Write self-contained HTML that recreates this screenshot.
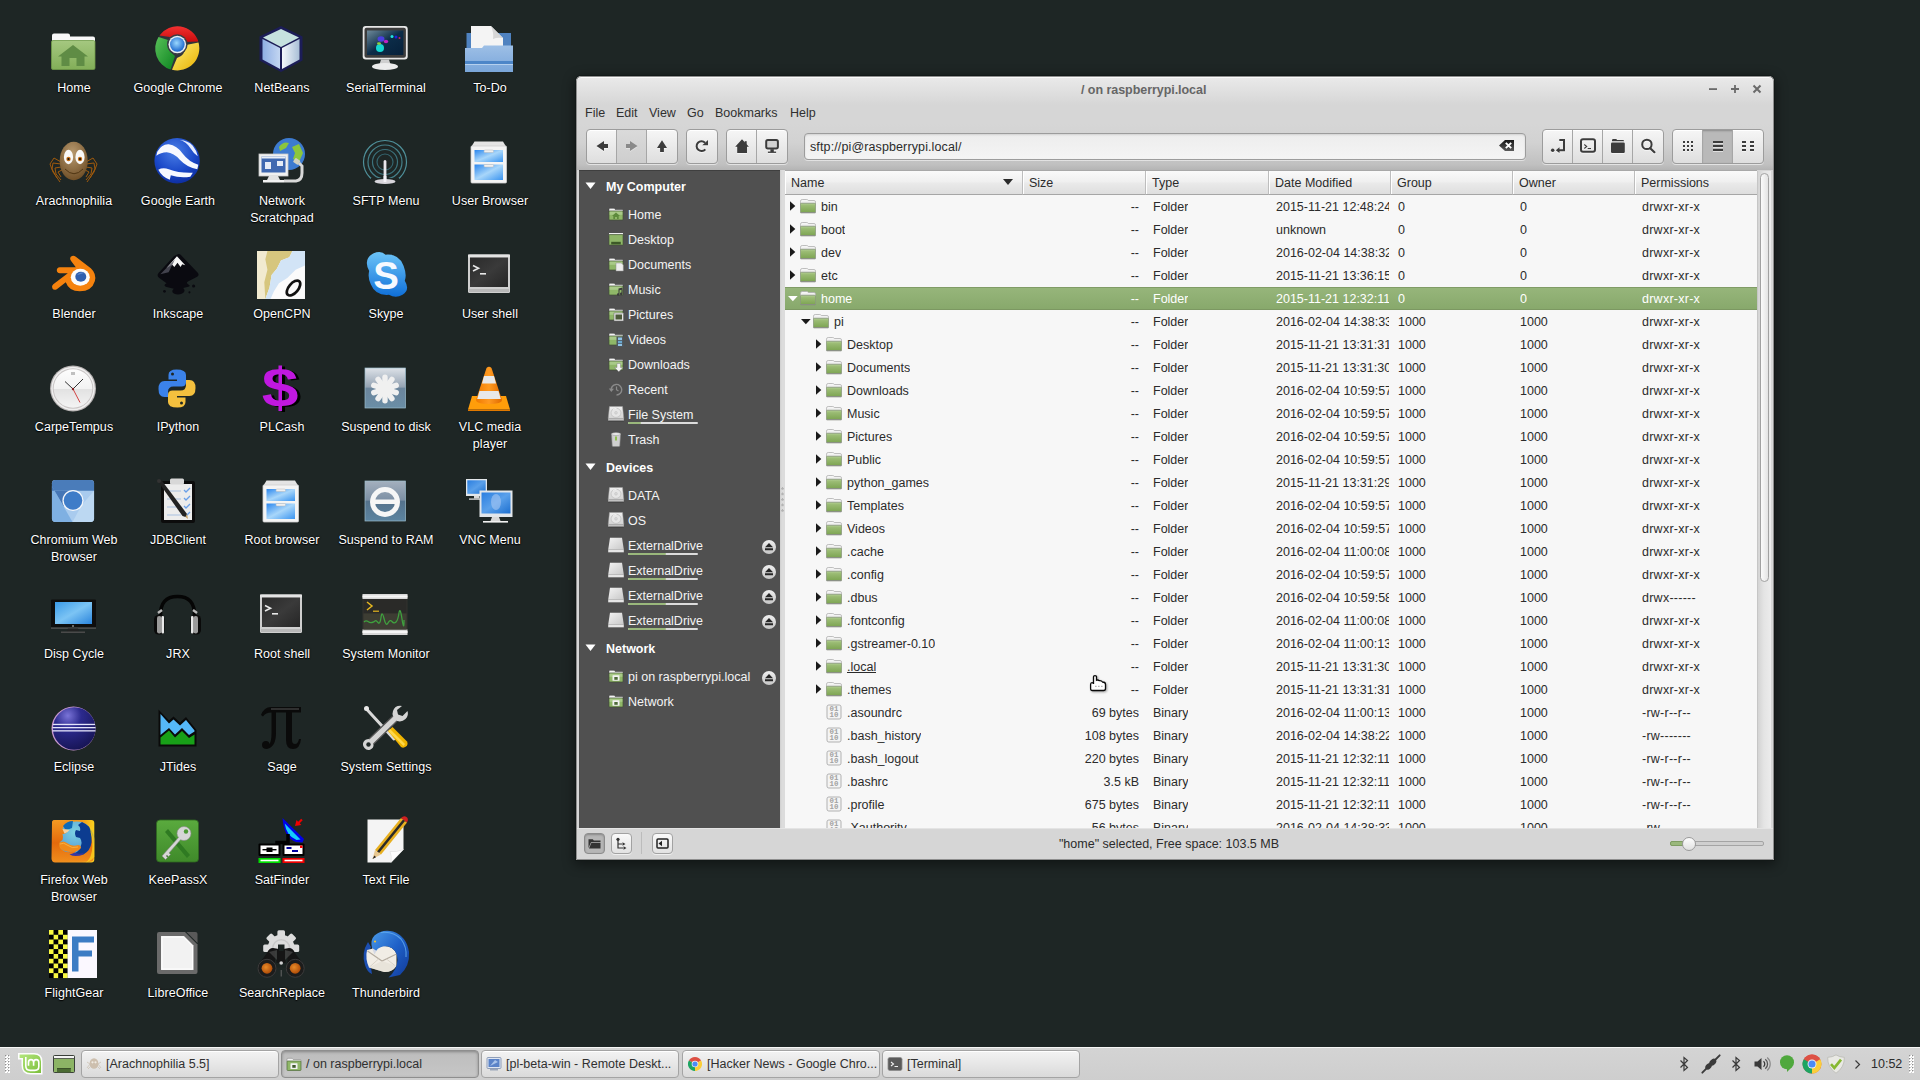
<!DOCTYPE html>
<html><head><meta charset="utf-8"><title>/ on raspberrypi.local</title>
<style>
*{box-sizing:border-box}
html,body{margin:0;padding:0}
body{width:1920px;height:1080px;overflow:hidden;background:#1e2625;font:12.5px "Liberation Sans", "DejaVu Sans", sans-serif;color:#2b2b2b;position:relative}
.abs,.dl,.di,.t,.tb,.sbi,.sbh,.c,.hd,.tk{position:absolute}
svg{display:block;position:absolute;overflow:visible}
.dl{width:120px;text-align:center;color:#fff;font-size:12.5px;line-height:17px;text-shadow:0 1px 1px #000,0 0 2px rgba(0,0,0,.8);white-space:pre-line;letter-spacing:.05px}
.di{width:48px;height:48px}
.di svg{left:0;top:0;width:48px;height:48px}
#win{position:absolute;left:576px;top:76px;width:1198px;height:784px;background:#d6d6d6;border-radius:5px 5px 0 0;box-shadow:0 0 0 1px rgba(18,24,23,.9),0 3px 12px 2px rgba(0,0,0,.42);overflow:hidden}
#title{position:absolute;left:0;top:1px;width:100%;height:47px;background:linear-gradient(#e9e9e9 0,#d6d6d6 27px,#d6d6d6 100%);border-top:1px solid #fafafa;border-radius:5px 5px 0 0}
#tbar{position:absolute;left:0;top:48px;width:100%;height:46px;background:linear-gradient(#d6d6d6 0,#d2d2d2 40%,#c0c0c0 88%,#b4b4b4 100%)}
.t{white-space:nowrap;line-height:16px;height:16px}
.grp{position:absolute;top:53px;height:35px;border:1px solid #9c9c9c;border-radius:4px;background:linear-gradient(#f6f6f6,#dedede);box-shadow:0 1px 0 rgba(255,255,255,.55), inset 0 1px 0 #fff;overflow:hidden}
.grp i{position:absolute;top:0;width:1px;height:100%;background:#a6a6a6}
.grp b{position:absolute;top:0;height:100%;background:#b9b9b9;box-shadow:inset 0 1px 2px rgba(0,0,0,.25)}
.grp u{position:absolute;top:0;height:100%;background:linear-gradient(#dadada,#cecece)}
.grp svg{top:8px;width:16px;height:16px}
#side{position:absolute;left:3px;top:94px;width:201px;height:658px;background:#505050;color:#fff;border-top:1px solid #3f3f3f}
.sbh{left:27px;font-weight:bold;color:#fff;line-height:16px;white-space:nowrap}
.sbi{left:49px;color:#f4f4f4;line-height:16px;white-space:nowrap}
.sic{position:absolute;left:29px;width:16px;height:16px}
.sic svg{left:0;top:0;width:16px;height:16px}
.bar{position:absolute;left:49px;width:70px;height:2px;background:#dcdcdc;border-radius:1px}
.bar span{position:absolute;left:0;top:0;height:2px;background:#9ab87c;border-radius:1px}
.ej{position:absolute;left:183px;width:14px;height:14px;border-radius:7px;background:linear-gradient(#efefef,#c6c6c6)}
.ej svg{left:3px;top:3.300px;width:8px;height:8px}
#list{position:absolute;left:209px;top:94px;width:972px;height:658px;background:#f7f7f7;overflow:hidden;border-top:1px solid #a8a8a8}
.hd{top:0;height:24px;background:linear-gradient(#fafafa 0,#f0f0f0 45%,#e9e9e9 55%,#dedede 100%);border-bottom:1px solid #a6a6a6;border-right:1px solid #bdbdbd;line-height:24px;padding-left:6px;white-space:nowrap;box-shadow:inset 1px 0 0 #fff}
.row{position:absolute;left:0;width:973px;height:23px}
.row.sel{background:linear-gradient(#97b67b,#87a86b);color:#fff;box-shadow:inset 0 1px 0 #809c66,inset 0 -1px 0 #7c9862}
.c{top:1px;height:22px;line-height:23px;white-space:nowrap;overflow:hidden}
.row svg.f{top:3px;width:16px;height:16px}
.row svg.e{top:6px;width:10px;height:10px}
#status{position:absolute;left:0;top:752px;width:100%;height:32px;background:#d6d6d6;border-top:1px solid #e4e4e4}
.sb{position:absolute;top:4px;width:21px;height:21px;border:1px solid #a2a2a2;border-radius:4px;background:linear-gradient(#fafafa,#e2e2e2);box-shadow:0 1px 0 rgba(255,255,255,.6)}
.sb svg{left:3px;top:3px;width:13px;height:13px}
#panel{position:absolute;left:0;top:1047px;width:1920px;height:33px;background:linear-gradient(#d4d4d4,#cecece);border-top:1px solid #f6f6f6}
.tk{top:2px;height:28px;width:198px;margin-left:-1px;border:1px solid #a4a4a4;border-radius:4px;background:linear-gradient(#f3f3f3,#dadada);box-shadow:inset 0 1px 0 #fff;line-height:26px;padding-left:24px;white-space:nowrap;overflow:hidden;color:#303030}
.tk.act{background:linear-gradient(#bdbdbd,#c6c6c6);box-shadow:inset 0 1px 3px rgba(0,0,0,.3);border-color:#8e8e8e}
.tk svg{left:4px;top:5px;width:16px;height:16px}
.tr{position:absolute;top:7px;width:18px;height:18px}
.tr svg{left:0;top:0;width:18px;height:18px}
</style></head><body>

<div id="desktop">
<div class="di" style="left:49px;top:25px"><svg viewBox="0 0 48 48"><defs><linearGradient id="hm1" x1="0" y1="0" x2="0" y2="1"><stop offset="0" stop-color="#a5c880"/><stop offset="1" stop-color="#82ae58"/></linearGradient></defs>
<path d="M3 10.500q0-2 2-2h14q2 0 2 2v1h23q2 0 2 2V18H3z" fill="#f8f8f8"/>
<rect x="2.500" y="15.500" width="43.500" height="29" rx="1.500" fill="url(#hm1)" stroke="#6f9a48" stroke-width=".8"/>
<path d="M24 20L39 31.500H35.500V41H27.500V33H20.500V41H12.500V31.500H9z" fill="#5f8c45"/></svg></div>
<div class="dl" style="left:14px;top:80px">Home</div>
<div class="di" style="left:153px;top:25px"><svg viewBox="0 0 48 48"><defs><radialGradient id="gc1" cx=".45" cy=".4" r=".6"><stop offset="0" stop-color="#9ad8ff"/><stop offset="1" stop-color="#1a66cc"/></radialGradient>
<linearGradient id="gc2" x1="0" y1="0" x2="0" y2="1"><stop offset="0" stop-color="#f23030"/><stop offset="1" stop-color="#c80c0c"/></linearGradient>
<linearGradient id="gc3" x1="0" y1="0" x2="1" y2="1"><stop offset="0" stop-color="#58c058"/><stop offset="1" stop-color="#0c8420"/></linearGradient>
<linearGradient id="gc4" x1="0" y1="0" x2="1" y2="1"><stop offset="0" stop-color="#fff078"/><stop offset="1" stop-color="#e8b000"/></linearGradient></defs>
<circle cx="24.300" cy="23.500" r="22" fill="#30343a"/>
<path d="M6.500 10.500A22 22 0 0 1 45.300 16.500L31 17Q27 9 17 12z" fill="url(#gc2)"/>
<path d="M45.500 17.500A22 22 0 0 1 19 44.800L24 33Q32 31 33 20z" fill="url(#gc4)"/>
<path d="M17.500 44.500A22 22 0 0 1 5.500 12L15 15Q12 24 22 31z" fill="url(#gc3)"/>
<circle cx="24.300" cy="19.500" r="10.300" fill="#3a3e46"/>
<circle cx="24.300" cy="19.500" r="8.800" fill="#e9eef2"/>
<circle cx="24.300" cy="19.500" r="7.300" fill="url(#gc1)"/></svg></div>
<div class="dl" style="left:118px;top:80px">Google Chrome</div>
<div class="di" style="left:257px;top:25px"><svg viewBox="0 0 48 48"><defs><linearGradient id="nb1" x1="0" y1="0" x2="1" y2="0"><stop offset="0" stop-color="#8eaee4"/><stop offset="1" stop-color="#c3d6f2"/></linearGradient><linearGradient id="nb2" x1="0" y1="0" x2="1" y2="0"><stop offset="0" stop-color="#f4f8fc"/><stop offset="1" stop-color="#a9bfd6"/></linearGradient></defs>
<path d="M24 1L45.500 11.500V35.500L24 47L2.500 35.500V11.500z" fill="#1c1d57"/>
<path d="M24 4L42 12.500L24 22L6 12.500z" fill="#c6e2df"/>
<path d="M5.500 14L23 23V44L5.500 34.500z" fill="url(#nb1)"/>
<path d="M25 23L42.500 14V34.500L25 44z" fill="url(#nb2)"/></svg></div>
<div class="dl" style="left:222px;top:80px">NetBeans</div>
<div class="di" style="left:361px;top:25px"><svg viewBox="0 0 48 48"><defs><linearGradient id="st1" x1="0" y1="0" x2="1" y2="1"><stop offset="0" stop-color="#6e8a9a"/><stop offset=".5" stop-color="#0c2c48"/><stop offset="1" stop-color="#06203a"/></linearGradient></defs>
<rect x="1.700" y="1" width="45" height="33.500" rx="3" fill="#e6e6e6"/>
<rect x="3.500" y="2.800" width="41.400" height="30" rx="2" fill="#3c3c3c"/>
<rect x="6" y="5.500" width="36.400" height="24.500" fill="url(#st1)"/>
<ellipse cx="20" cy="14" rx="3.500" ry="2.800" fill="#4b3fe0"/><ellipse cx="25" cy="16.500" rx="2.200" ry="1.800" fill="#c020c0"/>
<ellipse cx="19" cy="23" rx="4" ry="4" fill="#14d6d0"/><ellipse cx="18" cy="18.500" rx="2" ry="1.300" fill="#8fd040"/>
<circle cx="31" cy="11.500" r="1.500" fill="#20e0e0"/><circle cx="35" cy="12" r="1.500" fill="#2020e0"/><circle cx="38.500" cy="13" r="1" fill="#d02060"/>
<path d="M20 34.500h8l1.500 5h-11z" fill="#cfcfcf"/>
<ellipse cx="24" cy="41.500" rx="13" ry="3.600" fill="#ececec"/></svg></div>
<div class="dl" style="left:326px;top:80px">SerialTerminal</div>
<div class="di" style="left:465px;top:25px"><svg viewBox="0 0 48 48"><defs><linearGradient id="td1" x1="0" y1="0" x2="0" y2="1"><stop offset="0" stop-color="#9dbfe6"/><stop offset="1" stop-color="#7aa6da"/></linearGradient></defs>
<path d="M1.500 8h44.500v20H1.500z" fill="#4f82c0"/>
<path d="M6 1h20l12 12v18H6z" fill="#f4f4f4"/>
<path d="M26 1l12 12q-6-1-10 1q1-6-2-13z" fill="#d6d6d6"/>
<path d="M0 23h17l2-2.500h29V47H0z" fill="url(#td1)"/>
<rect x="0" y="36" width="48" height="3" fill="#4d86c8"/><rect x="0" y="39" width="48" height="1" fill="#b5d0ee"/></svg></div>
<div class="dl" style="left:430px;top:80px">To-Do</div>
<div class="di" style="left:49px;top:138px"><svg viewBox="0 0 48 48"><defs><radialGradient id="ar1" cx=".45" cy=".3" r=".75"><stop offset="0" stop-color="#b89a70"/><stop offset="1" stop-color="#6b4a22"/></radialGradient></defs>
<g fill="none" stroke="#a05a0c" stroke-width="1">
<path d="M12 24L5 20L1 26L4 34L11 44M12 26L4 25L3 31L8 40M12 29L6 30L7 36L12 42M13 32L9 34L12 39"/>
<path d="M37 24L44 20L48 26L45 34L38 44M37 26L45 25L46 31L41 40M37 29L43 30L42 36L37 42M36 32L40 34L37 39"/></g>
<ellipse cx="24.700" cy="23" rx="14" ry="19.300" fill="url(#ar1)"/>
<ellipse cx="19.500" cy="19" rx="4.600" ry="7.200" fill="#f8f8f8"/><ellipse cx="31" cy="19" rx="4.600" ry="7.200" fill="#f8f8f8"/>
<circle cx="19.500" cy="21" r="2.200" fill="#c87018"/><circle cx="31" cy="21" r="2.200" fill="#c87018"/>
<circle cx="19.500" cy="21" r="1.100" fill="#111"/><circle cx="31" cy="21" r="1.100" fill="#111"/>
<path d="M16 31q9 9.500 18 0" fill="none" stroke="#4a300f" stroke-width=".9"/></svg></div>
<div class="dl" style="left:14px;top:193px">Arachnophilia</div>
<div class="di" style="left:153px;top:138px"><svg viewBox="0 0 48 48"><defs><radialGradient id="ge1" cx=".45" cy=".3" r=".75"><stop offset="0" stop-color="#4a7ee6"/><stop offset=".6" stop-color="#1a48c8"/><stop offset="1" stop-color="#0c2a9a"/></radialGradient></defs>
<circle cx="24.100" cy="22.700" r="22.700" fill="url(#ge1)"/>
<g transform="translate(-.2 -2.300)"><path d="M4.500 16Q9 8 16 8.500Q24 9.500 30 18Q36 26 45.500 29L44.500 33.500Q34 31.500 27 24Q21 17 14 16.500Q8 16.500 3.500 20z" fill="#f6f8ff"/>
<path d="M27 4.500Q33 5 38 13Q41 18 45 20.500Q44 15 40 10Q35 4.500 27 4.500z" fill="#e6edff"/>
<path d="M5.500 34Q10 31.500 16 33.500Q26 37.500 40 37L37.500 41Q27 42.500 18 39.500L17 44Q9 41 5.500 34z" fill="#f6f8ff"/></g></svg></div>
<div class="dl" style="left:118px;top:193px">Google Earth</div>
<div class="di" style="left:257px;top:138px"><svg viewBox="0 0 48 48"><circle cx="32" cy="16" r="16" fill="#3d7bd0"/>
<path d="M22 9q4-6 10-4l-3 5l-6 3zM35 9l7-3l4 9l-4 9l-6-3l2-6z" fill="#8cc63c"/>
<rect x="2" y="16" width="29" height="22" fill="#f0f0f0" stroke="#c8c8c8" stroke-width=".8"/>
<rect x="4.500" y="18.500" width="24" height="16" fill="#3f68b0"/>
<rect x="4.500" y="18.500" width="24" height="2" fill="#e8eef8"/>
<rect x="8" y="24" width="6" height="7" fill="#e6ecf6"/><rect x="20" y="23" width="6" height="5" fill="#e6ecf6"/>
<path d="M12 38h9l2 4H10z" fill="#e2e2e2"/><rect x="6" y="42" width="21" height="2.500" fill="#f2f2f2"/>
<path d="M27 43h12q6-1 6-8v-7l-3-3" fill="none" stroke="#d8d8d8" stroke-width="3"/>
<rect x="37" y="21" width="6" height="5" rx="1" fill="#d0d0c0" transform="rotate(35 40 23)"/></svg></div>
<div class="dl" style="left:222px;top:193px">Network
Scratchpad</div>
<div class="di" style="left:361px;top:138px"><svg viewBox="0 0 48 48"><g fill="none" stroke="#4f909a" stroke-width="1.200"><circle cx="24" cy="24" r="21.500"/><circle cx="24" cy="24" r="17" stroke="#45808a"/><circle cx="24" cy="24" r="12.500" stroke="#3c727c"/><circle cx="24" cy="24" r="8" stroke="#34646e"/></g>
<rect x="10" y="40" width="28" height="8" fill="#1e2625"/>
<path d="M22.600 23q1.400-2 2.800 0V43h-2.800z" fill="#e8e6ec"/>
<ellipse cx="24" cy="43.500" rx="10.500" ry="2.600" fill="#d8d6dc"/><rect x="22.600" y="38" width="2.800" height="6" fill="#f4f2f8"/></svg></div>
<div class="dl" style="left:326px;top:193px">SFTP Menu</div>
<div class="di" style="left:465px;top:138px"><svg viewBox="0 0 48 48"><defs><linearGradient id="cb1" x1="0" y1="0" x2="1" y2="1"><stop offset="0" stop-color="#2a86ee"/><stop offset=".5" stop-color="#a8d6fa"/><stop offset="1" stop-color="#3a94f0"/></linearGradient></defs>
<path d="M9.500 3.500h28.500l3 5H6.500z" fill="#e4e4e4"/>
<rect x="6" y="8" width="35.500" height="37" rx="1" fill="#f4f4f4" stroke="#cfcfcf" stroke-width=".8"/>
<rect x="9.500" y="12" width="28.500" height="12" fill="url(#cb1)"/>
<rect x="9.500" y="26.500" width="28.500" height="15.500" fill="url(#cb1)"/>
<rect x="19" y="12" width="9.500" height="2.500" rx="1" fill="#f0f0f0" stroke="#b8b8b8" stroke-width=".5"/>
<rect x="19" y="26.500" width="9.500" height="2.500" rx="1" fill="#f0f0f0" stroke="#b8b8b8" stroke-width=".5"/></svg></div>
<div class="dl" style="left:430px;top:193px">User Browser</div>
<div class="di" style="left:49px;top:251px"><svg viewBox="0 0 48 48"><g transform="translate(1.800 -1.800)"><path d="M20 7.500q2.500-2 5 0L40 19q6 5.500 4 13q-3 10-15 10q-11 0-14-9L6 40q-3 1.500-4.500-1q-1-2.500 1-4L17 24H9q-3-.3-3-3t3-3h16L20.500 12q-2-2.500-.5-4.500z" fill="#f5820e"/>
<ellipse cx="29.500" cy="28" rx="9.500" ry="8.500" fill="#fbfbfb"/><ellipse cx="30" cy="27.500" rx="5.500" ry="5" fill="#2f5fae"/><path d="M26 26q3-4 8-2.500z" fill="#5a86cc"/></g></svg></div>
<div class="dl" style="left:14px;top:306px">Blender</div>
<div class="di" style="left:153px;top:251px"><svg viewBox="0 0 48 48"><g transform="translate(-1 0) scale(1.040 1.060)"><path d="M24 3.500q2-1.500 4 .5L44 20.500q2 2.500-1 4l-8 4q-3 1.500 0 3q3 1.500-1 2.500l-4 1q3 3-1 5t-8 0q-3-2 0-4.500l-7-1.500q-4-1.500 0-3.500l-7-5q-3-2.500-.5-5L21 5z" fill="#0a0a10"/>
<path d="M24 5l8 8.500l-3-1l-1.500 2.500l-3-4l-3 4l-2-2l-5.500 3z" fill="#f6f6f6"/>
<path d="M8 22L22 8l-6 12z" fill="#50505c" opacity=".8"/>
<circle cx="40" cy="33" r="1.500" fill="#0a0a10"/><circle cx="12" cy="38" r="1.300" fill="#0a0a10"/><circle cx="36" cy="39" r="1" fill="#0a0a10"/></g></svg></div>
<div class="dl" style="left:118px;top:306px">Inkscape</div>
<div class="di" style="left:257px;top:251px"><svg viewBox="0 0 48 48"><g transform="translate(-1.040 -1.560) scale(1.043)"><rect x="1" y="1.500" width="46" height="46" fill="#fbfbfb"/>
<path d="M1 1.500h34l-3 6l-8 3l-4 8l-5 6l-2 12l-4 11H1z" fill="#d6c67e"/>
<path d="M1 1.500h10l-2 8l2 10l-3 12l1 16H1z" fill="#f1ead0"/>
<path d="M35 1.500h12v14l-9 4l-8 8l-8 5l-5 8l-3 7h-5l4-11l2-12l5-6l4-8l8-3z" fill="#d2e4f6"/>
<ellipse cx="36" cy="37" rx="8.500" ry="4.500" transform="rotate(-50 36 37)" fill="none" stroke="#111" stroke-width="2.600"/></g></svg></div>
<div class="dl" style="left:222px;top:306px">OpenCPN</div>
<div class="di" style="left:361px;top:251px"><svg viewBox="0 0 48 48"><defs><linearGradient id="sk1" x1="0" y1="0" x2="0" y2="1"><stop offset="0" stop-color="#6cc4f8"/><stop offset="1" stop-color="#0f6fd8"/></linearGradient></defs>
<g transform="translate(24 24) scale(1.130) translate(-23.500 -24)"><path d="M13 5q7-3 11 1q12-1 16 10q3 8 1 13q5 8-2 12.500q-6 3.500-12 0q-12 1-16-9q-3-6-1.500-12Q4 10 13 5z" fill="url(#sk1)"/>
<text x="24.500" y="36.500" font-family="Liberation Sans,sans-serif" font-weight="bold" font-size="34" text-anchor="middle" fill="#f6f9ff">S</text></g></svg></div>
<div class="dl" style="left:326px;top:306px">Skype</div>
<div class="di" style="left:465px;top:251px"><svg viewBox="0 0 48 48"><defs><linearGradient id="tm1" x1="0" y1="0" x2="1" y2="1"><stop offset="0" stop-color="#2a2a2a"/><stop offset=".5" stop-color="#3a3a3a"/><stop offset="1" stop-color="#262626"/></linearGradient></defs>
<rect x="3" y="3.500" width="42" height="38.500" rx="1.500" fill="#cfcfcf"/>
<rect x="3" y="3.500" width="42" height="3" fill="#e4e4e4"/>
<rect x="5" y="6.500" width="38" height="29.500" fill="url(#tm1)"/>
<rect x="4" y="38" width="40" height="3" fill="#b8b8b8"/>
<path d="M8 14.500l5.500 2.800L8 20" fill="none" stroke="#e8e8e8" stroke-width="1.600"/><rect x="15" y="22" width="6" height="1.600" fill="#e8e8e8"/></svg></div>
<div class="dl" style="left:430px;top:306px">User shell</div>
<div class="di" style="left:49px;top:364px"><svg viewBox="0 0 48 48"><defs><linearGradient id="ct1" x1="0" y1="0" x2="0" y2="1"><stop offset="0" stop-color="#fdfdfd"/><stop offset=".5" stop-color="#f2f2f2"/><stop offset=".52" stop-color="#e2e2e2"/><stop offset="1" stop-color="#f4f4f4"/></linearGradient></defs>
<circle cx="24" cy="24.500" r="23" fill="#b8b4b4"/><circle cx="24" cy="24.500" r="21.800" fill="#efefef"/><circle cx="24" cy="24.500" r="20.300" fill="#c8c4c4"/>
<circle cx="24" cy="24.500" r="19.300" fill="url(#ct1)"/>
<rect x="22" y="8" width="4" height="3" fill="#c0c0c0"/>
<path d="M24 25L16 17.500M24 25L34 15" stroke="#333" stroke-width="1"/><path d="M24 25L31 38.500" stroke="#d03030" stroke-width=".9"/><circle cx="24" cy="25" r="1.200" fill="#802020"/></svg></div>
<div class="dl" style="left:14px;top:419px">CarpeTempus</div>
<div class="di" style="left:153px;top:364px"><svg viewBox="0 0 48 48"><path d="M23.500 5.500q-8 0-8 5.500v4.500h8.500v1.500H11.500q-6 0-6 8t6 8H15v-5q0-5.500 5.500-5.500h8q4.500 0 4.500-4.500V11q0-5.500-9.500-5.500z" fill="#3b82ea"/>
<circle cx="19.500" cy="10" r="1.500" fill="#1e2625"/>
<path d="M24.500 43.500q8 0 8-5.500v-4.500H24V32h12.500q6 0 6-8t-6-8H33v5q0 5.500-5.500 5.500h-8q-4.500 0-4.500 4.500V38q0 5.500 9.500 5.500z" fill="#f4c03e"/>
<circle cx="28.500" cy="39" r="1.500" fill="#1e2625"/></svg></div>
<div class="dl" style="left:118px;top:419px">IPython</div>
<div class="di" style="left:257px;top:364px"><svg viewBox="0 0 48 48"><text x="21.800" y="43.500" font-family="Liberation Sans,sans-serif" font-weight="bold" font-size="55" text-anchor="middle" fill="#000" transform="scale(1.200 1)" >$</text>
<text x="19.300" y="42.500" font-family="Liberation Sans,sans-serif" font-weight="bold" font-size="55" text-anchor="middle" fill="#c018e0" transform="scale(1.200 1)">$</text></svg></div>
<div class="dl" style="left:222px;top:419px">PLCash</div>
<div class="di" style="left:361px;top:364px"><svg viewBox="0 0 48 48"><defs><linearGradient id="su1" x1="0" y1="0" x2="0" y2="1"><stop offset="0" stop-color="#dde2e8"/><stop offset=".48" stop-color="#94a2b2"/><stop offset=".5" stop-color="#6c859c"/><stop offset="1" stop-color="#6a8ea6"/></linearGradient></defs>
<rect x="4" y="4" width="40.500" height="40" fill="url(#su1)" stroke="#9cbccc" stroke-width=".7"/><g fill="#f0f0f0"><circle cx="24" cy="25" r="7"/><rect x="21.300" y="10.500" width="5.400" height="14" rx="2.700" transform="rotate(0 24 25)"/><rect x="21.300" y="10.500" width="5.400" height="14" rx="2.700" transform="rotate(36 24 25)"/><rect x="21.300" y="10.500" width="5.400" height="14" rx="2.700" transform="rotate(72 24 25)"/><rect x="21.300" y="10.500" width="5.400" height="14" rx="2.700" transform="rotate(108 24 25)"/><rect x="21.300" y="10.500" width="5.400" height="14" rx="2.700" transform="rotate(144 24 25)"/><rect x="21.300" y="10.500" width="5.400" height="14" rx="2.700" transform="rotate(180 24 25)"/><rect x="21.300" y="10.500" width="5.400" height="14" rx="2.700" transform="rotate(216 24 25)"/><rect x="21.300" y="10.500" width="5.400" height="14" rx="2.700" transform="rotate(252 24 25)"/><rect x="21.300" y="10.500" width="5.400" height="14" rx="2.700" transform="rotate(288 24 25)"/><rect x="21.300" y="10.500" width="5.400" height="14" rx="2.700" transform="rotate(324 24 25)"/></g></svg></div>
<div class="dl" style="left:326px;top:419px">Suspend to disk</div>
<div class="di" style="left:465px;top:364px"><svg viewBox="0 0 48 48"><defs><linearGradient id="vl1" x1="0" y1="0" x2="1" y2="0"><stop offset="0" stop-color="#f07a00"/><stop offset=".5" stop-color="#ff9a20"/><stop offset="1" stop-color="#e06a00"/></linearGradient></defs>
<path d="M7 32h34l4 13.500H3z" fill="#ff9d0a"/><path d="M3 45.500h42v1.500H3z" fill="#e07800"/>
<path d="M21.500 4q2.500-2.500 5 0L37 36q0 4-13 4T11 36z" fill="url(#vl1)"/>
<path d="M19 12h10l2 7.500H17z" fill="#e8e8e8"/><path d="M14.500 27h19l2.300 8H12.200z" fill="#e8e8e8"/></svg></div>
<div class="dl" style="left:430px;top:419px">VLC media
player</div>
<div class="di" style="left:49px;top:477px"><svg viewBox="0 0 48 48"><g transform="translate(.500 .500) scale(.979)"><rect x="2.500" y="2.500" width="43" height="43" rx="3.500" fill="#a9cbee"/>
<path d="M2.500 6q0-3.500 3.500-3.500h36q3.500 0 3.500 3.500V13.500H2.500z" fill="#4a7cba"/>
<path d="M2.500 9L23.500 45.500H6Q2.500 45.500 2.500 42z" fill="#7fb0e2"/><path d="M2.500 9l12 20.500l9-16H2.500z" fill="#4576b6"/>
<path d="M45.500 13.500V42q0 3.500-3.500 3.500H23.500L33 28z" fill="#bcd8f2"/>
<circle cx="24" cy="23.500" r="10.800" fill="#f4f7fb"/><circle cx="24" cy="23.500" r="9.500" fill="#3e7cc8"/></g></svg></div>
<div class="dl" style="left:14px;top:532px">Chromium Web
Browser</div>
<div class="di" style="left:153px;top:477px"><svg viewBox="0 0 48 48"><rect x="8" y="4" width="34" height="42" rx="2" fill="#0c0c0c"/>
<rect x="11" y="7" width="28" height="36" fill="#ececec"/>
<rect x="17" y="1.500" width="14" height="6" rx="1.500" fill="#d8d8d8"/>
<g stroke="#a8c0e0" stroke-width="1"><path d="M14 14h14M14 22h14M14 30h14M14 38h14"/></g>
<g fill="none" stroke="#6aa0e8" stroke-width="1.300"><path d="M31 13l2 2l4-4M31 21l2 2l4-4M31 29l2 2l4-4M31 37l2 2l4-4"/></g>
<path d="M5 4.500l3-2L34 37l-1.500 3l-3-1z" fill="#222"/><path d="M32.500 40L34 37l1 5z" fill="#c8a060"/><circle cx="6" cy="4" r="2" fill="#333"/></svg></div>
<div class="dl" style="left:118px;top:532px">JDBClient</div>
<div class="di" style="left:257px;top:477px"><svg viewBox="0 0 48 48"><defs><linearGradient id="cb2" x1="0" y1="0" x2="1" y2="1"><stop offset="0" stop-color="#2a86ee"/><stop offset=".5" stop-color="#a8d6fa"/><stop offset="1" stop-color="#3a94f0"/></linearGradient></defs>
<path d="M9.500 3.500h28.500l3 5H6.500z" fill="#e4e4e4"/>
<rect x="6" y="8" width="35.500" height="37" rx="1" fill="#f4f4f4" stroke="#cfcfcf" stroke-width=".8"/>
<rect x="9.500" y="12" width="28.500" height="12" fill="url(#cb2)"/>
<rect x="9.500" y="26.500" width="28.500" height="15.500" fill="url(#cb2)"/>
<rect x="19" y="12" width="9.500" height="2.500" rx="1" fill="#f0f0f0" stroke="#b8b8b8" stroke-width=".5"/>
<rect x="19" y="26.500" width="9.500" height="2.500" rx="1" fill="#f0f0f0" stroke="#b8b8b8" stroke-width=".5"/></svg></div>
<div class="dl" style="left:222px;top:532px">Root browser</div>
<div class="di" style="left:361px;top:477px"><svg viewBox="0 0 48 48"><defs><linearGradient id="su2" x1="0" y1="0" x2="0" y2="1"><stop offset="0" stop-color="#a4b0be"/><stop offset=".48" stop-color="#7c8fa4"/><stop offset=".5" stop-color="#55728c"/><stop offset="1" stop-color="#5c84a0"/></linearGradient></defs>
<rect x="4" y="4" width="40.500" height="40" fill="url(#su2)" stroke="#9cbccc" stroke-width=".7"/><circle cx="24" cy="25" r="12.500" fill="none" stroke="#f6f6f6" stroke-width="5"/><rect x="12" y="22.500" width="24" height="4.500" fill="#f6f6f6"/></svg></div>
<div class="dl" style="left:326px;top:532px">Suspend to RAM</div>
<div class="di" style="left:465px;top:477px"><svg viewBox="0 0 48 48"><defs><linearGradient id="vn1" x1="0" y1="0" x2="1" y2="1"><stop offset="0" stop-color="#2a7ee0"/><stop offset=".5" stop-color="#5aa0ea"/><stop offset="1" stop-color="#1c6fd0"/></linearGradient></defs>
<rect x="1" y="2" width="21" height="17" fill="#e2e6ea"/><rect x="2.300" y="3.300" width="18.400" height="13.500" fill="url(#vn1)"/><rect x="9" y="19" width="5" height="2.500" fill="#d8d8d8"/><rect x="4" y="21.500" width="14" height="1.200" fill="#e8e8e8"/>
<rect x="14.500" y="13.500" width="33" height="26.500" fill="#e2e6ea"/><rect x="16.500" y="15.500" width="29" height="21" fill="url(#vn1)"/>
<ellipse cx="31" cy="25" rx="5" ry="8" fill="#a8c8f4" opacity=".6"/>
<path d="M27 40h7l1.500 4h-10z" fill="#d8d8d8"/><rect x="18" y="44" width="25" height="1.600" fill="#f2f2f2"/></svg></div>
<div class="dl" style="left:430px;top:532px">VNC Menu</div>
<div class="di" style="left:49px;top:590px"><svg viewBox="0 0 48 48"><defs><linearGradient id="dc1" x1="0" y1="0" x2="1" y2="1"><stop offset="0" stop-color="#3a9ae8"/><stop offset=".5" stop-color="#7cc4f4"/><stop offset="1" stop-color="#2a84dc"/></linearGradient></defs>
<rect x="2" y="9.500" width="45" height="28" rx="1" fill="#0e0e0e"/>
<rect x="6" y="12" width="37" height="22" fill="url(#dc1)"/>
<rect x="2" y="37.500" width="45" height="1.200" fill="#5a5a5a"/><path d="M19 38.500h10l1 3H18z" fill="#222"/><rect x="12" y="41.500" width="24" height="1.500" fill="#4a4a4a"/><circle cx="24" cy="36" r=".8" fill="#ddd"/></svg></div>
<div class="dl" style="left:14px;top:646px">Disp Cycle</div>
<div class="di" style="left:153px;top:590px"><svg viewBox="0 0 48 48"><path d="M7.500 26Q7 6.500 24.500 6.500T41.500 26" fill="none" stroke="#050505" stroke-width="3.500"/>
<path d="M5 23l4-3M44 23l-4-3" stroke="#b8b8b8" stroke-width="2.500"/>
<rect x="1" y="25" width="10.500" height="19.500" rx="4.500" fill="#0a0a0a"/><rect x="37.500" y="25" width="10.500" height="19.500" rx="4.500" fill="#0a0a0a"/>
<rect x="4" y="26" width="4.500" height="17.500" rx="2.200" fill="#9a9a9a"/><rect x="40.500" y="26" width="4.500" height="17.500" rx="2.200" fill="#9a9a9a"/>
<rect x="8.500" y="26" width="2.500" height="17.500" rx="1" fill="#e8e8e8"/><rect x="38" y="26" width="2.500" height="17.500" rx="1" fill="#e8e8e8"/></svg></div>
<div class="dl" style="left:118px;top:646px">JRX</div>
<div class="di" style="left:257px;top:591px"><svg viewBox="0 0 48 48"><defs><linearGradient id="tm2" x1="0" y1="0" x2="1" y2="1"><stop offset="0" stop-color="#2a2a2a"/><stop offset=".5" stop-color="#3a3a3a"/><stop offset="1" stop-color="#262626"/></linearGradient></defs>
<rect x="3" y="3.500" width="42" height="38.500" rx="1.500" fill="#cfcfcf"/>
<rect x="3" y="3.500" width="42" height="3" fill="#e4e4e4"/>
<rect x="5" y="6.500" width="38" height="29.500" fill="url(#tm2)"/>
<rect x="4" y="38" width="40" height="3" fill="#b8b8b8"/>
<path d="M8 14.500l5.500 2.800L8 20" fill="none" stroke="#e8e8e8" stroke-width="1.600"/><rect x="15" y="22" width="6" height="1.600" fill="#e8e8e8"/></svg></div>
<div class="dl" style="left:222px;top:646px">Root shell</div>
<div class="di" style="left:361px;top:590px"><svg viewBox="0 0 48 48"><rect x="1.500" y="4" width="45" height="41" fill="#33332e"/>
<rect x="1.500" y="4" width="45" height="5" fill="#d8d8d8"/><rect x="1.500" y="5.500" width="45" height="2" fill="#f6f6f6"/>
<rect x="1.500" y="39.500" width="45" height="5.500" fill="#d8d8d8"/><rect x="1.500" y="41" width="45" height="2" fill="#f6f6f6"/>
<rect x="2.500" y="9" width="43" height="14.500" fill="#2a2a28"/><rect x="2.500" y="23.500" width="43" height="16" fill="#3d3d33"/>
<path d="M6 12l5 4l-5 4" fill="none" stroke="#e6b820" stroke-width="1.500"/><rect x="12" y="20.500" width="6" height="1.500" fill="#c09a20"/>
<path d="M3 32q2-2 4-.5t4 1t3-1.500t3 1.500t3-5t3 1t4 4.500t4-1.500t4 .5t3-9t3 6t2 1" fill="none" stroke="#3fa03f" stroke-width="1.300"/></svg></div>
<div class="dl" style="left:326px;top:646px">System Monitor</div>
<div class="di" style="left:49px;top:704px"><svg viewBox="0 0 48 48"><defs><radialGradient id="ec1" cx=".35" cy=".2" r=".9"><stop offset="0" stop-color="#7a74d8"/><stop offset=".35" stop-color="#2c2a8e"/><stop offset="1" stop-color="#14124e"/></radialGradient></defs>
<circle cx="24.500" cy="24.500" r="22" fill="#c898d0"/><circle cx="25.200" cy="24.500" r="21.300" fill="url(#ec1)"/>
<g fill="#e4e4fa"><rect x="4" y="19.800" width="42" height="1.300"/><rect x="3.500" y="23" width="43" height="1.300"/><rect x="3.500" y="26.200" width="43" height="1.300"/></g></svg></div>
<div class="dl" style="left:14px;top:759px">Eclipse</div>
<div class="di" style="left:153px;top:703px"><svg viewBox="0 0 48 48"><path d="M5.500 6.500L5.500 43.500H43.500V27L33 14L27 19.500L20.500 13.500L16 17.500z" fill="#0a0a0a"/>
<path d="M7.500 11L7.500 32L16 25L22 31.500L29 25L36 32L41.500 28.500V27.500L33 17L27 22.500L20.500 16.500L16 20.500z" fill="#55b8f8"/>
<path d="M7.500 34.500L16 27.500L22 34.500L29 28L36 35L41.500 31.500V41.500H7.500z" fill="#18a018"/></svg></div>
<div class="dl" style="left:118px;top:759px">JTides</div>
<div class="di" style="left:257px;top:703px"><svg viewBox="0 0 48 48"><path d="M4 12q3-8 10-8h30v5.500H35V37q0 4 3 4t4-5h2q-1 10-8 10t-7-9V9.500H19V30q0 14-9 16q-5 0-5-4t4-4q3 0 3.500 3q2-3 2-11V9.500q-6 0-8.500 4z" fill="#0a0a0a"/>
<path d="M14 6h28" stroke="#555" stroke-width="1"/></svg></div>
<div class="dl" style="left:222px;top:759px">Sage</div>
<div class="di" style="left:361px;top:703px"><svg viewBox="0 0 48 48"><path d="M5 5.500L33 36" stroke="#d8d8d8" stroke-width="3" stroke-linecap="round"/><circle cx="5.500" cy="5.500" r="2.500" fill="#e8e8e8"/>
<path d="M27 28l4.500-4L46 38.500q1.500 3-1 5t-5 .5z" fill="#f0b400"/><path d="M27 28l2-2L44 41l-1.500 2z" fill="#ffd84a"/>
<path d="M41 3q-7-1-9 5q-1 3 0 5L8 36q-4 0-5.500 3t1 6t6 1.500t3-5.500L36 18q5 1.500 8.500-2t2-8l-5 5l-4.500-1.500L36 7z" fill="#d4d4d4"/>
<path d="M32 13L8 36M36 18L12.500 41" stroke="#555" stroke-width="1.200"/><circle cx="7.500" cy="41.500" r="2.200" fill="#1e2625"/></svg></div>
<div class="dl" style="left:326px;top:759px">System Settings</div>
<div class="di" style="left:49px;top:816px"><svg viewBox="0 0 48 48"><defs><radialGradient id="ff1" cx=".45" cy=".3" r=".75"><stop offset="0" stop-color="#7ed2e2"/><stop offset="1" stop-color="#4a8fd2"/></radialGradient>
<linearGradient id="ff2" x1="0" y1="0" x2="1" y2="0"><stop offset="0" stop-color="#ee8a1e"/><stop offset=".7" stop-color="#f39a1c"/><stop offset="1" stop-color="#fbd21e"/></linearGradient>
<linearGradient id="ff3" x1="0" y1="0" x2="0" y2="1"><stop offset="0" stop-color="#f49a22"/><stop offset=".55" stop-color="#e46a0c"/><stop offset="1" stop-color="#f08c1c"/></linearGradient></defs>
<rect x="3" y="4" width="42.300" height="42.500" rx="3" fill="url(#ff2)"/>
<circle cx="27.500" cy="23" r="17.500" fill="url(#ff1)"/>
<path d="M14 10q4-5 10-5l-1 7q-4 2-7 1z" fill="#0f6ab8"/>
<path d="M33 6q8 3 11 12q2 10-4 18q-3 5-9 6q-6 1-12-2l5-3q5 0 7-5q3-6 0-10l-4-1q-2-4 0-7l4 1q1-4-2-6z" fill="#0c3c90"/>
<path d="M18 38q6 4 13 3l4-4q-8 2-12-2z" fill="#3a38a0"/>
<path d="M3 7q0-3 3-3h12q-5 3-5.500 9l7 1q-2 4-6 4q1 3 0 6q-4 2-3 7q3 6 11 5q5-1 7-4q-1 5-8 6.500q6 3 14 0q7-4 8-12q1-6-1-11q3 5 3 10v17q0 3-3 3h-36q-3 0-3-3z" fill="url(#ff3)"/>
<path d="M10 27q4-3 8 0q5 4 11 2q3 0 3 3q-3 4-10 4q-7 0-10-4q-2-2-2-5z" fill="#f08a1a"/>
<path d="M11 28q4-2 7 1q5 4 11 2" fill="none" stroke="#f8b040" stroke-width="1"/>
<path d="M13.500 13l7 1q-2 3-5 3.500z" fill="#f6d0a0"/>
<path d="M40 9q5 6 5.300 14v18q-3 4-8 5.500q6-6 6-16q0-9-3.300-21.500z" fill="#fbd21e" opacity=".8"/></svg></div>
<div class="dl" style="left:14px;top:872px">Firefox Web
Browser</div>
<div class="di" style="left:153px;top:817px"><svg viewBox="0 0 48 48"><defs><linearGradient id="kp1" x1="0" y1="0" x2="0" y2="1"><stop offset="0" stop-color="#5aaa3e"/><stop offset="1" stop-color="#3f8a2a"/></linearGradient></defs>
<rect x="3.500" y="3" width="42" height="42" rx="3.500" fill="url(#kp1)" stroke="#2f6a20" stroke-width=".8"/>
<path d="M12 15l3-3L37 38l-3 3z" fill="#2f7a22"/><path d="M33 13l3 3L15 41l-3-3z" fill="#2f7a22" opacity=".0"/>
<path d="M31 9.500a7 7 0 1 1 0 14q-2 0-3.500-.8L16 36l1.500 1.500l-2 2L14 38l-1 1l1.500 1.500l-2 2L9 39l16.500-18.500Q24 18.500 24 16.500a7 7 0 0 1 7-7z" fill="#d6d6d6" stroke="#8a8a8a" stroke-width=".6"/>
<circle cx="33" cy="14.500" r="2.200" fill="#4c9a34"/></svg></div>
<div class="dl" style="left:118px;top:872px">KeePassX</div>
<div class="di" style="left:257px;top:816px"><svg viewBox="0 0 48 48"><path d="M25.500 2L47 23L45.500 26.500L39 26Q27 22 25.500 2z" fill="#0000e8"/><path d="M27.700 7.500L43.500 23.500L39.500 24Q29.500 20 27.700 7.500z" fill="#14ccfa"/>
<path d="M38 10l1.500-6l1.700 1.700l3-3l1.500 1.500l-3 3l1.700 1.700z" fill="#f00000"/>
<path d="M31 18v8.500H20v3" fill="none" stroke="#000" stroke-width="3.500"/>
<rect x="1.500" y="27.500" width="22" height="12.500" rx="1" fill="#000"/><rect x="3.500" y="29.500" width="18" height="8.500" fill="#fff"/><rect x="5.500" y="33" width="14" height="1.400" fill="#000"/><rect x="9.500" y="31.500" width="6" height="4.500" fill="#000"/>
<rect x="25.500" y="27.500" width="22" height="12.500" rx="1" fill="#000"/><rect x="27.500" y="29.500" width="18" height="8.500" fill="#fff"/><rect x="29.500" y="31" width="5" height="2" fill="#0000a0"/><rect x="35" y="34" width="6" height="2" fill="#0000a0"/><rect x="43" y="29.500" width="2.500" height="2.500" fill="#f00"/>
<rect x="1.500" y="42" width="22" height="5" fill="#00e000"/><rect x="3.500" y="43.700" width="18" height="1.600" fill="#fff"/>
<rect x="25.500" y="42" width="22" height="5" fill="#f00000"/><rect x="27.500" y="43.700" width="18" height="1.600" fill="#fff"/></svg></div>
<div class="dl" style="left:222px;top:872px">SatFinder</div>
<div class="di" style="left:361px;top:816px"><svg viewBox="0 0 48 48"><path d="M6.500 3.500h36v30L30 46.500H6.500z" fill="#f4f4f4"/>
<path d="M42.500 33.500L30 46.500q1-7-1-11q6 1 13.500-2z" fill="#fdfdfd" stroke="#d8d8d8" stroke-width=".5"/>
<path d="M40 2l6 4.500L20 38.500l-6-4.500z" fill="#e8b020"/><path d="M42 3.500l2 1.500L18 37l-2-1.500z" fill="#2a2a2a"/>
<path d="M40 2q3-3 5.500-1t.5 5.500z" fill="#d02020"/>
<path d="M14 34l6 4.500L11.500 43z" fill="#e8c890"/><path d="M11.500 43l2-3.500l1.500 1.800z" fill="#222"/></svg></div>
<div class="dl" style="left:326px;top:872px">Text File</div>
<div class="di" style="left:49px;top:929px"><svg viewBox="0 0 48 48"><rect x="0.00" y="1.00" width="4.700" height="4.850" fill="#f8f840"/><rect x="0.00" y="5.80" width="4.700" height="4.850" fill="#000"/><rect x="0.00" y="10.60" width="4.700" height="4.850" fill="#f8f840"/><rect x="0.00" y="15.40" width="4.700" height="4.850" fill="#000"/><rect x="0.00" y="20.20" width="4.700" height="4.850" fill="#f8f840"/><rect x="0.00" y="25.00" width="4.700" height="4.850" fill="#000"/><rect x="0.00" y="29.80" width="4.700" height="4.850" fill="#f8f840"/><rect x="0.00" y="34.60" width="4.700" height="4.850" fill="#000"/><rect x="0.00" y="39.40" width="4.700" height="4.850" fill="#f8f840"/><rect x="0.00" y="44.20" width="4.700" height="4.850" fill="#000"/><rect x="4.67" y="1.00" width="4.700" height="4.850" fill="#000"/><rect x="4.67" y="5.80" width="4.700" height="4.850" fill="#f8f840"/><rect x="4.67" y="10.60" width="4.700" height="4.850" fill="#000"/><rect x="4.67" y="15.40" width="4.700" height="4.850" fill="#f8f840"/><rect x="4.67" y="20.20" width="4.700" height="4.850" fill="#000"/><rect x="4.67" y="25.00" width="4.700" height="4.850" fill="#f8f840"/><rect x="4.67" y="29.80" width="4.700" height="4.850" fill="#000"/><rect x="4.67" y="34.60" width="4.700" height="4.850" fill="#f8f840"/><rect x="4.67" y="39.40" width="4.700" height="4.850" fill="#000"/><rect x="4.67" y="44.20" width="4.700" height="4.850" fill="#f8f840"/><rect x="9.33" y="1.00" width="4.700" height="4.850" fill="#f8f840"/><rect x="9.33" y="5.80" width="4.700" height="4.850" fill="#000"/><rect x="9.33" y="10.60" width="4.700" height="4.850" fill="#f8f840"/><rect x="9.33" y="15.40" width="4.700" height="4.850" fill="#000"/><rect x="9.33" y="20.20" width="4.700" height="4.850" fill="#f8f840"/><rect x="9.33" y="25.00" width="4.700" height="4.850" fill="#000"/><rect x="9.33" y="29.80" width="4.700" height="4.850" fill="#f8f840"/><rect x="9.33" y="34.60" width="4.700" height="4.850" fill="#000"/><rect x="9.33" y="39.40" width="4.700" height="4.850" fill="#f8f840"/><rect x="9.33" y="44.20" width="4.700" height="4.850" fill="#000"/><rect x="14.00" y="1.00" width="4.700" height="4.850" fill="#000"/><rect x="14.00" y="5.80" width="4.700" height="4.850" fill="#f8f840"/><rect x="14.00" y="10.60" width="4.700" height="4.850" fill="#000"/><rect x="14.00" y="15.40" width="4.700" height="4.850" fill="#f8f840"/><rect x="14.00" y="20.20" width="4.700" height="4.850" fill="#000"/><rect x="14.00" y="25.00" width="4.700" height="4.850" fill="#f8f840"/><rect x="14.00" y="29.80" width="4.700" height="4.850" fill="#000"/><rect x="14.00" y="34.60" width="4.700" height="4.850" fill="#f8f840"/><rect x="14.00" y="39.40" width="4.700" height="4.850" fill="#000"/><rect x="14.00" y="44.20" width="4.700" height="4.850" fill="#f8f840"/><rect x="18.600" y="1" width="29.400" height="48" fill="#fbf8ff"/>
<path d="M23 7.500h22v6H29.500v8H43v6H29.500V42.500H23z" fill="#3c7cc4"/></svg></div>
<div class="dl" style="left:14px;top:985px">FlightGear</div>
<div class="di" style="left:153px;top:929px"><svg viewBox="0 0 48 48"><path d="M6 3h26l12.500 12.500V43q0 2-2 2H6q-2 0-2-2V5q0-2 2-2z" fill="#6a6a6a"/>
<path d="M8 7h23l9.500 9.500V41H8z" fill="#f2f2f2"/><path d="M9 8h21.500l9 9v23H9z" fill="none" stroke="#fff" stroke-width="1"/>
<path d="M33.500 3h9q2 0 2 2v9z" fill="#5a5a5a"/></svg></div>
<div class="dl" style="left:118px;top:985px">LibreOffice</div>
<div class="di" style="left:257px;top:929px"><svg viewBox="0 0 48 48"><defs><radialGradient id="sr1" cx=".4" cy=".4" r=".7"><stop offset="0" stop-color="#e88a28"/><stop offset="1" stop-color="#a84404"/></radialGradient></defs>
<g fill="#dcdcdc"><circle cx="24.200" cy="19.300" r="13.500"/><rect x="20.400" y="1.300" width="7.600" height="9" rx="1.500" transform="rotate(0 24.200 19.300)"/><rect x="20.400" y="1.300" width="7.600" height="9" rx="1.500" transform="rotate(45 24.200 19.300)"/><rect x="20.400" y="1.300" width="7.600" height="9" rx="1.500" transform="rotate(90 24.200 19.300)"/><rect x="20.400" y="1.300" width="7.600" height="9" rx="1.500" transform="rotate(135 24.200 19.300)"/><rect x="20.400" y="1.300" width="7.600" height="9" rx="1.500" transform="rotate(180 24.200 19.300)"/><rect x="20.400" y="1.300" width="7.600" height="9" rx="1.500" transform="rotate(225 24.200 19.300)"/><rect x="20.400" y="1.300" width="7.600" height="9" rx="1.500" transform="rotate(270 24.200 19.300)"/><rect x="20.400" y="1.300" width="7.600" height="9" rx="1.500" transform="rotate(315 24.200 19.300)"/></g>
<circle cx="24.200" cy="19.300" r="8.500" fill="none" stroke="#c8c8c8" stroke-width="1.500"/>
<rect x="21" y="15.500" width="6.500" height="7" fill="#1a2220"/>
<path d="M10 24Q12 19 16 19L22 20V24H26.500V20L32 19Q36 19 38 24L47 36Q48 47 38 47.500Q29 47 28.500 38V34H19.500V38Q19 47 10 47.500Q0 47 1 36z" fill="#151515"/>
<rect x="18" y="22" width="12.500" height="16.500" fill="#1b2321"/><rect x="19.500" y="22" width="9" height="12" fill="#151515"/><path d="M12 23l8-2v10zM36 23l-8-2v10z" fill="#4a4a4a" opacity=".7"/>
<circle cx="10" cy="39.300" r="9" fill="#1c1c1c" stroke="#3c3c3c" stroke-width="1"/><circle cx="38.200" cy="39.300" r="9" fill="#1c1c1c" stroke="#3c3c3c" stroke-width="1"/>
<circle cx="10" cy="39.300" r="5.400" fill="url(#sr1)"/><circle cx="38.200" cy="39.300" r="5.400" fill="url(#sr1)"/>
<circle cx="24.200" cy="34" r="1.800" fill="#d0d0d0"/><rect x="23.700" y="41" width="1" height="6.500" fill="#666"/></svg></div>
<div class="dl" style="left:222px;top:985px">SearchReplace</div>
<div class="di" style="left:361px;top:929px"><svg viewBox="0 0 48 48"><defs><linearGradient id="tb1" x1="0" y1="0" x2="1" y2="1"><stop offset="0" stop-color="#4a9ae8"/><stop offset=".5" stop-color="#1e60c8"/><stop offset="1" stop-color="#123a98"/></linearGradient></defs>
<path d="M7 13Q0 24 4 36Q6 43 11 45L9.500 36Q6 26 10 18z" fill="#1c4eb0"/>
<path d="M6 21L22 17Q32 16.500 35.500 25L35.500 37Q31 43.500 23 43L8 38.500Q4 30 6 21z" fill="#f1ede5"/>
<path d="M6.500 22L21 32L35.500 25" fill="none" stroke="#b4aca0" stroke-width="1.100"/><path d="M8.500 38L17.500 30M34.500 37L25.500 30" stroke="#d6d0c4" stroke-width=".9"/><path d="M8 38.500L23 43Q31 43.500 35.500 37L21 32z" fill="#e2ddd2" opacity=".6"/>
<path d="M13.500 6.500Q21 0 32 2.500Q45.500 7 48 23Q49 37 39 46L27.500 48.500Q36 41 36.500 31Q36.500 20 27 17.500Q19 16.500 15 22L11 19Q9 11 13.500 6.500z" fill="url(#tb1)"/>
<path d="M20 3.500Q32 2 40 10Q46 18 45 28" fill="none" stroke="#6ab4f4" stroke-width="1.200" opacity=".7"/>
<path d="M11 19l4.500 3l-2 3.500z" fill="#d4d8e4"/><circle cx="14" cy="12.500" r="1.100" fill="#f4c430"/></svg></div>
<div class="dl" style="left:326px;top:985px">Thunderbird</div>
</div>

<div id="win">
<div id="title"></div>
<div class="t" style="left:505px;top:6px;font-weight:bold;color:#666;letter-spacing:-.05px">/ on raspberrypi.local</div>
<svg style="left:1131px;top:7px;width:12px;height:12px" viewBox="0 0 12 12"><rect x="2" y="5.2" width="8" height="1.8" fill="#6a6a6a"/></svg>
<svg style="left:1153px;top:7px;width:12px;height:12px" viewBox="0 0 12 12"><path d="M5.1 2h1.8v3.1H10v1.8H6.9V10H5.1V6.9H2V5.100H5.1z" fill="#6a6a6a"/></svg>
<svg style="left:1175px;top:7px;width:12px;height:12px" viewBox="0 0 12 12"><path d="M2.5 2.5l7 7M9.500 2.500l-7 7" stroke="#6a6a6a" stroke-width="2" fill="none"/></svg>
<div class="t" style="left:9px;top:29px;color:#303030">File</div>
<div class="t" style="left:40px;top:29px;color:#303030">Edit</div>
<div class="t" style="left:73px;top:29px;color:#303030">View</div>
<div class="t" style="left:111px;top:29px;color:#303030">Go</div>
<div class="t" style="left:139px;top:29px;color:#303030">Bookmarks</div>
<div class="t" style="left:214px;top:29px;color:#303030">Help</div>
<div id="tbar"></div>
<div class="grp" style="left:10px;width:92px"><u style="left:30px;width:29px"></u><svg style="left:7px" viewBox="0 0 16 16"><g transform="translate(0 1)" opacity=".55"><path d="M2.500 8L10 3v3h4v4h-4v3z" fill="#fff"/></g><path d="M2.500 8L10 3v3h4v4h-4v3z" fill="#3c3c3c"/></svg><i style="left:29px"></i><svg style="left:37px" viewBox="0 0 16 16"><g transform="translate(0 1)" opacity=".55"><path d="M13.500 8L6 3v3H2v4h4v3z" fill="#eee"/></g><path d="M13.500 8L6 3v3H2v4h4v3z" fill="#8a8a8a"/></svg><i style="left:59px"></i><svg style="left:67px" viewBox="0 0 16 16"><g transform="translate(0 1)" opacity=".55"><path d="M8 2.300L13 10H9.900V14H6.100V10H3z" fill="#fff"/></g><path d="M8 2.300L13 10H9.900V14H6.100V10H3z" fill="#3c3c3c"/></svg></div>
<div class="grp" style="left:110px;width:32px"><svg style="left:7px" viewBox="0 0 16 16"><g transform="translate(0 1)" opacity=".55"><path d="M11.300 11.300A4.900 4.900 0 1 1 11 4.700" fill="none" stroke="#fff" stroke-width="2"/><path d="M14 1.900V7.300H8.300z" fill="#fff"/></g><path d="M11.300 11.300A4.900 4.900 0 1 1 11 4.700" fill="none" stroke="#3c3c3c" stroke-width="2"/><path d="M14 1.900V7.300H8.300z" fill="#3c3c3c"/></svg></div>
<div class="grp" style="left:150px;width:62px"><svg style="left:7px" viewBox="0 0 16 16"><g transform="translate(0 1)" opacity=".55"><path d="M8 1.200L14.900 8.800H13V14.900H3.200V8.800H1.200z" fill="#fff"/><rect x="10.700" y="3.200" width="2" height="3.600" fill="#fff"/></g><path d="M8 1.200L14.900 8.800H13V14.900H3.200V8.800H1.200z" fill="#3c3c3c"/><rect x="10.700" y="3.200" width="2" height="3.600" fill="#3c3c3c"/></svg><i style="left:29px"></i><svg style="left:37px" viewBox="0 0 16 16"><g transform="translate(0 1)" opacity=".55"><rect x="2.200" y="2.100" width="11.700" height="8.300" rx="1.600" fill="none" stroke="#fff" stroke-width="2"/><rect x="6.400" y="11.200" width="3.400" height="2.800" fill="#fff"/><rect x="3.900" y="13.600" width="8.200" height="1.300" fill="#fff"/></g><rect x="2.200" y="2.100" width="11.700" height="8.300" rx="1.600" fill="#d2d2d2" stroke="#3c3c3c" stroke-width="2"/><rect x="6.400" y="11.200" width="3.400" height="2.800" fill="#3c3c3c"/><rect x="3.900" y="13.600" width="8.200" height="1.300" fill="#3c3c3c"/></svg></div>
<div class="grp" style="left:966px;width:122px"><svg style="left:7px" viewBox="0 0 16 16"><g transform="translate(0 1)" opacity=".55"><circle cx="2.700" cy="12.200" r="1.750" fill="#fff"/><path d="M9.300 2H14V12.200H9" fill="none" stroke="#fff" stroke-width="2"/><path d="M5.800 12.200L9.500 9.300v5.800z" fill="#fff"/></g><circle cx="2.700" cy="12.200" r="1.750" fill="#3c3c3c"/><path d="M9.300 2H14V12.200H9" fill="none" stroke="#3c3c3c" stroke-width="2"/><path d="M5.800 12.200L9.500 9.300v5.800z" fill="#3c3c3c"/></svg><i style="left:29px"></i><svg style="left:37px" viewBox="0 0 16 16"><g transform="translate(0 1)" opacity=".55"><rect x="1" y="1.200" width="14" height="12.600" rx="2" fill="none" stroke="#fff" stroke-width="2"/><path d="M4.300 6.500l2.400 2l-2.400 2" fill="none" stroke="#fff" stroke-width="1.100"/><rect x="7.700" y="10" width="3.300" height="1.100" fill="#fff"/></g><rect x="1" y="1.200" width="14" height="12.600" rx="2" fill="none" stroke="#3c3c3c" stroke-width="2"/><path d="M4.300 6.500l2.400 2l-2.400 2" fill="none" stroke="#3c3c3c" stroke-width="1.100"/><rect x="7.700" y="10" width="3.300" height="1.100" fill="#3c3c3c"/></svg><i style="left:59px"></i><svg style="left:67px" viewBox="0 0 16 16"><g transform="translate(0 1)" opacity=".55"><path d="M2 2.200q0-1.200 1.200-1.200h3l1 1H13q1 0 1 1V3.300H2z" fill="#fff"/><rect x="1" y="4.500" width="13.800" height="10.400" rx="1.200" fill="#fff"/></g><path d="M2 2.200q0-1.200 1.200-1.200h3l1 1H13q1 0 1 1V3.300H2z" fill="#3c3c3c"/><rect x="1" y="4.500" width="13.800" height="10.400" rx="1.200" fill="#3c3c3c"/></svg><i style="left:89px"></i><svg style="left:97px" viewBox="0 0 16 16"><g transform="translate(0 1)" opacity=".55"><circle cx="6.900" cy="6.400" r="4.700" fill="none" stroke="#fff" stroke-width="2"/><path d="M10.200 10.200l4.200 4" stroke="#fff" stroke-width="2.200" stroke-linecap="round"/></g><circle cx="6.900" cy="6.400" r="4.700" fill="none" stroke="#3c3c3c" stroke-width="2"/><path d="M10.200 10.200l4.200 4" stroke="#3c3c3c" stroke-width="2.200" stroke-linecap="round"/></svg></div>
<div class="grp" style="left:1096px;width:92px"><b style="left:29px;width:31px"></b><svg style="left:7px" viewBox="0 0 16 16"><g transform="translate(0 1)" opacity=".55"><rect x="3" y="3" width="2" height="2" fill="#fff"/><rect x="3" y="7" width="2" height="2" fill="#fff"/><rect x="3" y="11" width="2" height="2" fill="#fff"/><rect x="7" y="3" width="2" height="2" fill="#fff"/><rect x="7" y="7" width="2" height="2" fill="#fff"/><rect x="7" y="11" width="2" height="2" fill="#fff"/><rect x="11" y="3" width="2" height="2" fill="#fff"/><rect x="11" y="7" width="2" height="2" fill="#fff"/><rect x="11" y="11" width="2" height="2" fill="#fff"/></g><rect x="3" y="3" width="2" height="2" fill="#3c3c3c"/><rect x="3" y="7" width="2" height="2" fill="#3c3c3c"/><rect x="3" y="11" width="2" height="2" fill="#3c3c3c"/><rect x="7" y="3" width="2" height="2" fill="#3c3c3c"/><rect x="7" y="7" width="2" height="2" fill="#3c3c3c"/><rect x="7" y="11" width="2" height="2" fill="#3c3c3c"/><rect x="11" y="3" width="2" height="2" fill="#3c3c3c"/><rect x="11" y="7" width="2" height="2" fill="#3c3c3c"/><rect x="11" y="11" width="2" height="2" fill="#3c3c3c"/></svg><i style="left:29px"></i><svg style="left:37px" viewBox="0 0 16 16"><g transform="translate(0 1)" opacity=".55"><rect x="3" y="3" width="10" height="2" fill="#fff"/><rect x="3" y="7" width="10" height="2" fill="#fff"/><rect x="3" y="11" width="10" height="2" fill="#fff"/></g><rect x="3" y="3" width="10" height="2" fill="#3c3c3c"/><rect x="3" y="7" width="10" height="2" fill="#3c3c3c"/><rect x="3" y="11" width="10" height="2" fill="#3c3c3c"/></svg><i style="left:59px"></i><svg style="left:67px" viewBox="0 0 16 16"><g transform="translate(0 1)" opacity=".55"><rect x="2" y="3" width="4" height="2" fill="#fff"/><rect x="2" y="7" width="4" height="2" fill="#fff"/><rect x="2" y="11" width="4" height="2" fill="#fff"/><rect x="10" y="3" width="4" height="2" fill="#fff"/><rect x="10" y="7" width="4" height="2" fill="#fff"/><rect x="10" y="11" width="4" height="2" fill="#fff"/></g><rect x="2" y="3" width="4" height="2" fill="#3c3c3c"/><rect x="2" y="7" width="4" height="2" fill="#3c3c3c"/><rect x="2" y="11" width="4" height="2" fill="#3c3c3c"/><rect x="10" y="3" width="4" height="2" fill="#3c3c3c"/><rect x="10" y="7" width="4" height="2" fill="#3c3c3c"/><rect x="10" y="11" width="4" height="2" fill="#3c3c3c"/></svg></div>
<div class="abs" style="left:228px;top:57px;width:722px;height:27px;border:1px solid #9c9c9c;border-radius:4px;background:linear-gradient(#ededed,#f4f4f4);box-shadow:inset 0 1px 2px rgba(0,0,0,.12),0 1px 0 rgba(255,255,255,.5)"></div>
<div class="t" style="left:234px;top:63px;color:#2b2b2b;letter-spacing:.12px">sftp://pi@raspberrypi.local/</div>
<svg style="left:922px;top:63px;width:16px;height:16px" viewBox="0 0 16 16"><defs><linearGradient id="cl" x1="0" y1="0" x2="0" y2="1"><stop offset="0" stop-color="#161616"/><stop offset="1" stop-color="#5a5a5a"/></linearGradient></defs><path d="M1 6.500L7 1H16V12H7z" fill="url(#cl)"/><path d="M7.800 3.800l5.400 5.400M13.200 3.800l-5.400 5.400" stroke="#fff" stroke-width="1.900"/></svg>
<div id="side">
<svg style="left:6px;top:11px;width:11px;height:8px" viewBox="0 0 11 8"><path d="M0.5 0.5h10L5.5 7z" fill="#fff"/></svg>
<div class="sbh" style="top:8px">My Computer</div>
<div class="sic" style="top:35px"><svg viewBox="0 0 16 16"><path d="M1 3.2q0-.9.9-.9h4.3l1 1.2h6.9q.9 0 .9.9v1.2H1z" fill="#f2f2f2" stroke="#3a3a3a" stroke-width=".5"/><rect x="1" y="5" width="14" height="9" rx=".8" fill="#8fb768" stroke="#3f4f33" stroke-width=".7"/><rect x="1.6" y="5.6" width="12.8" height="3.2" fill="#b3d196" opacity=".7"/><path d="M8 6.500L12 10h-1.300v3H9V11H7v2H5.300v-3H4z" fill="#5d8a3c"/></svg></div>
<div class="sbi" style="top:36px">Home</div>
<div class="sic" style="top:60px"><svg viewBox="0 0 16 16"><rect x="1" y="2" width="14" height="1.600" fill="#efefef"/><rect x="1" y="3.600" width="14" height="10.400" rx=".6" fill="#8fb768" stroke="#3f4f33" stroke-width=".6"/><rect x="3.200" y="10.800" width="9.600" height="2.600" fill="#3d5a28"/></svg></div>
<div class="sbi" style="top:61px">Desktop</div>
<div class="sic" style="top:85px"><svg viewBox="0 0 16 16"><path d="M1 3.2q0-.9.9-.9h4.3l1 1.2h6.9q.9 0 .9.9v1.2H1z" fill="#f2f2f2" stroke="#3a3a3a" stroke-width=".5"/><rect x="1" y="5" width="14" height="9" rx=".8" fill="#8fb768" stroke="#3f4f33" stroke-width=".7"/><rect x="1.6" y="5.6" width="12.8" height="3.2" fill="#b3d196" opacity=".7"/><path d="M8 7h5.300l2 2v6H8z" fill="#ededed" stroke="#8c8c8c" stroke-width=".5"/></svg></div>
<div class="sbi" style="top:86px">Documents</div>
<div class="sic" style="top:110px"><svg viewBox="0 0 16 16"><path d="M1 3.2q0-.9.9-.9h4.3l1 1.2h6.9q.9 0 .9.9v1.2H1z" fill="#f2f2f2" stroke="#3a3a3a" stroke-width=".5"/><rect x="1" y="5" width="14" height="9" rx=".8" fill="#8fb768" stroke="#3f4f33" stroke-width=".7"/><rect x="1.6" y="5.6" width="12.8" height="3.2" fill="#b3d196" opacity=".7"/><path d="M10.500 7.500l4-1v6.300a1.300 1.300 0 1 1-1-1.200V8.800l-2 .5v4.200a1.300 1.300 0 1 1-1-1.200z" fill="#3b3b3b"/></svg></div>
<div class="sbi" style="top:111px">Music</div>
<div class="sic" style="top:135px"><svg viewBox="0 0 16 16"><path d="M1 3.2q0-.9.9-.9h4.3l1 1.2h6.9q.9 0 .9.9v1.2H1z" fill="#f2f2f2" stroke="#3a3a3a" stroke-width=".5"/><rect x="1" y="5" width="14" height="9" rx=".8" fill="#8fb768" stroke="#3f4f33" stroke-width=".7"/><rect x="1.6" y="5.6" width="12.8" height="3.2" fill="#b3d196" opacity=".7"/><rect x="6" y="7" width="9.500" height="8" fill="#e6e6e6" stroke="#666" stroke-width=".5"/><rect x="7.500" y="8.500" width="6.500" height="5" fill="#4d5a3a"/></svg></div>
<div class="sbi" style="top:136px">Pictures</div>
<div class="sic" style="top:160px"><svg viewBox="0 0 16 16"><path d="M1 3.2q0-.9.9-.9h4.3l1 1.2h6.9q.9 0 .9.9v1.2H1z" fill="#f2f2f2" stroke="#3a3a3a" stroke-width=".5"/><rect x="1" y="5" width="14" height="9" rx=".8" fill="#8fb768" stroke="#3f4f33" stroke-width=".7"/><rect x="1.6" y="5.6" width="12.8" height="3.2" fill="#b3d196" opacity=".7"/><rect x="8.500" y="5.500" width="7" height="10" fill="#505860"/><rect x="10" y="6.500" width="4" height="2.500" fill="#8ec3e6"/><rect x="10" y="9.800" width="4" height="2.500" fill="#6aa8d0"/><rect x="10" y="13" width="4" height="2" fill="#8ec3e6"/></svg></div>
<div class="sbi" style="top:161px">Videos</div>
<div class="sic" style="top:185px"><svg viewBox="0 0 16 16"><path d="M1 3.2q0-.9.9-.9h4.3l1 1.2h6.9q.9 0 .9.9v1.2H1z" fill="#f2f2f2" stroke="#3a3a3a" stroke-width=".5"/><rect x="1" y="5" width="14" height="9" rx=".8" fill="#8fb768" stroke="#3f4f33" stroke-width=".7"/><rect x="1.6" y="5.6" width="12.8" height="3.2" fill="#b3d196" opacity=".7"/><path d="M9 7.500h3.500v4H15l-4.200 4.300L6.500 11.500H9z" fill="#f2f2f2" stroke="#777" stroke-width=".4"/></svg></div>
<div class="sbi" style="top:186px">Downloads</div>
<div class="sic" style="top:210px"><svg viewBox="0 0 16 16"><path d="M3.200 9.500A5.300 5.300 0 1 1 8.500 14" fill="none" stroke="#8a8a8a" stroke-width="1.400"/><path d="M0.800 7.500l2.500 3.500l2.700-3.300z" fill="#8a8a8a"/><path d="M8.500 5.500v3.200l2 1.300" fill="none" stroke="#8a8a8a" stroke-width="1.200"/></svg></div>
<div class="sbi" style="top:211px">Recent</div>
<div class="sic" style="top:235px"><svg viewBox="0 0 16 16"><defs><linearGradient id="dk" x1="0" y1="0" x2="0" y2="1"><stop offset="0" stop-color="#f0f0f0"/><stop offset="1" stop-color="#d2d2d2"/></linearGradient></defs><path d="M1.500 .500H14.500L15.800 12.500H.200z" fill="url(#dk)" stroke="#9c9c9c" stroke-width=".5"/><ellipse cx="8" cy="6.800" rx="5" ry="4.600" fill="#e6e6e6" stroke="#bcbcbc" stroke-width=".7"/><path d="M5 3.500Q6.500 1.800 8.500 2.500" fill="none" stroke="#fafafa" stroke-width=".8"/><circle cx="8" cy="6.800" r="1.400" fill="#d6d6d6" stroke="#c0c0c0" stroke-width=".5"/><rect x=".200" y="12.500" width="15.600" height="2.600" fill="#c2c2c2"/><rect x=".200" y="14.600" width="15.600" height="1.100" fill="#3c3c3c"/></svg></div>
<div class="sbi" style="top:236px">File System</div>
<div class="bar" style="top:251px"><span style="width:13px"></span></div>
<div class="sic" style="top:260px"><svg viewBox="0 0 16 16"><path d="M3.500 3h9l-.7 11.500q-.1 1-1 1H5.200q-.9 0-1-1z" fill="#cfcfcf" stroke="#8a8a8a" stroke-width=".6"/><ellipse cx="8" cy="3" rx="4.500" ry="1.500" fill="#e9e9e9" stroke="#8a8a8a" stroke-width=".5"/><path d="M7 5.500h2v4H7z" fill="#8fbf4f"/></svg></div>
<div class="sbi" style="top:261px">Trash</div>
<svg style="left:6px;top:292px;width:11px;height:8px" viewBox="0 0 11 8"><path d="M0.5 0.5h10L5.5 7z" fill="#fff"/></svg>
<div class="sbh" style="top:289px">Devices</div>
<div class="sic" style="top:316px"><svg viewBox="0 0 16 16"><defs><linearGradient id="dk" x1="0" y1="0" x2="0" y2="1"><stop offset="0" stop-color="#f0f0f0"/><stop offset="1" stop-color="#d2d2d2"/></linearGradient></defs><path d="M1.500 .500H14.500L15.800 12.500H.200z" fill="url(#dk)" stroke="#9c9c9c" stroke-width=".5"/><ellipse cx="8" cy="6.800" rx="5" ry="4.600" fill="#e6e6e6" stroke="#bcbcbc" stroke-width=".7"/><path d="M5 3.500Q6.500 1.800 8.500 2.500" fill="none" stroke="#fafafa" stroke-width=".8"/><circle cx="8" cy="6.800" r="1.400" fill="#d6d6d6" stroke="#c0c0c0" stroke-width=".5"/><rect x=".200" y="12.500" width="15.600" height="2.600" fill="#c2c2c2"/><rect x=".200" y="14.600" width="15.600" height="1.100" fill="#3c3c3c"/></svg></div>
<div class="sbi" style="top:317px">DATA</div>
<div class="sic" style="top:341px"><svg viewBox="0 0 16 16"><defs><linearGradient id="dk" x1="0" y1="0" x2="0" y2="1"><stop offset="0" stop-color="#f0f0f0"/><stop offset="1" stop-color="#d2d2d2"/></linearGradient></defs><path d="M1.500 .500H14.500L15.800 12.500H.200z" fill="url(#dk)" stroke="#9c9c9c" stroke-width=".5"/><ellipse cx="8" cy="6.800" rx="5" ry="4.600" fill="#e6e6e6" stroke="#bcbcbc" stroke-width=".7"/><path d="M5 3.500Q6.500 1.800 8.500 2.500" fill="none" stroke="#fafafa" stroke-width=".8"/><circle cx="8" cy="6.800" r="1.400" fill="#d6d6d6" stroke="#c0c0c0" stroke-width=".5"/><rect x=".200" y="12.500" width="15.600" height="2.600" fill="#c2c2c2"/><rect x=".200" y="14.600" width="15.600" height="1.100" fill="#3c3c3c"/></svg></div>
<div class="sbi" style="top:342px">OS</div>
<div class="sic" style="top:366px"><svg viewBox="0 0 16 16"><defs><linearGradient id="dx" x1="0" y1="0" x2="1" y2="1"><stop offset="0" stop-color="#f4f4f4"/><stop offset="1" stop-color="#c8c8c8"/></linearGradient></defs><path d="M2 .800H14L15.800 12.500H.200z" fill="url(#dx)"/><rect x=".200" y="12.500" width="15.600" height="2.700" fill="#e6e6e6"/><rect x=".200" y="15" width="15.600" height=".6" fill="#8a8a8a"/></svg></div>
<div class="sbi" style="top:367px">ExternalDrive</div>
<div class="bar" style="top:382px"><span style="width:38px"></span></div>
<div class="ej" style="top:369px"><svg viewBox="0 0 8 8"><path d="M4 0L8 4.200H0zM0 5.300h8v1.900H0z" fill="#262626"/></svg></div>
<div class="sic" style="top:391px"><svg viewBox="0 0 16 16"><defs><linearGradient id="dx" x1="0" y1="0" x2="1" y2="1"><stop offset="0" stop-color="#f4f4f4"/><stop offset="1" stop-color="#c8c8c8"/></linearGradient></defs><path d="M2 .800H14L15.800 12.500H.200z" fill="url(#dx)"/><rect x=".200" y="12.500" width="15.600" height="2.700" fill="#e6e6e6"/><rect x=".200" y="15" width="15.600" height=".6" fill="#8a8a8a"/></svg></div>
<div class="sbi" style="top:392px">ExternalDrive</div>
<div class="bar" style="top:407px"><span style="width:38px"></span></div>
<div class="ej" style="top:394px"><svg viewBox="0 0 8 8"><path d="M4 0L8 4.200H0zM0 5.300h8v1.900H0z" fill="#262626"/></svg></div>
<div class="sic" style="top:416px"><svg viewBox="0 0 16 16"><defs><linearGradient id="dx" x1="0" y1="0" x2="1" y2="1"><stop offset="0" stop-color="#f4f4f4"/><stop offset="1" stop-color="#c8c8c8"/></linearGradient></defs><path d="M2 .800H14L15.800 12.500H.200z" fill="url(#dx)"/><rect x=".200" y="12.500" width="15.600" height="2.700" fill="#e6e6e6"/><rect x=".200" y="15" width="15.600" height=".6" fill="#8a8a8a"/></svg></div>
<div class="sbi" style="top:417px">ExternalDrive</div>
<div class="bar" style="top:432px"><span style="width:38px"></span></div>
<div class="ej" style="top:419px"><svg viewBox="0 0 8 8"><path d="M4 0L8 4.200H0zM0 5.300h8v1.900H0z" fill="#262626"/></svg></div>
<div class="sic" style="top:441px"><svg viewBox="0 0 16 16"><defs><linearGradient id="dx" x1="0" y1="0" x2="1" y2="1"><stop offset="0" stop-color="#f4f4f4"/><stop offset="1" stop-color="#c8c8c8"/></linearGradient></defs><path d="M2 .800H14L15.800 12.500H.200z" fill="url(#dx)"/><rect x=".200" y="12.500" width="15.600" height="2.700" fill="#e6e6e6"/><rect x=".200" y="15" width="15.600" height=".6" fill="#8a8a8a"/></svg></div>
<div class="sbi" style="top:442px">ExternalDrive</div>
<div class="bar" style="top:457px"><span style="width:38px"></span></div>
<div class="ej" style="top:444px"><svg viewBox="0 0 8 8"><path d="M4 0L8 4.200H0zM0 5.300h8v1.900H0z" fill="#262626"/></svg></div>
<svg style="left:6px;top:473px;width:11px;height:8px" viewBox="0 0 11 8"><path d="M0.5 0.5h10L5.5 7z" fill="#fff"/></svg>
<div class="sbh" style="top:470px">Network</div>
<div class="sic" style="top:497px"><svg viewBox="0 0 16 16"><path d="M1 3.2q0-.9.9-.9h4.3l1 1.2h6.9q.9 0 .9.9v1.2H1z" fill="#f2f2f2" stroke="#3a3a3a" stroke-width=".5"/><rect x="1" y="5" width="14" height="9" rx=".8" fill="#8fb768" stroke="#3f4f33" stroke-width=".7"/><rect x="1.6" y="5.6" width="12.8" height="3.2" fill="#b3d196" opacity=".7"/><rect x="4.500" y="7.300" width="7" height="5.500" rx=".5" fill="#f2f2f2"/><rect x="6.300" y="9" width="3.400" height="2.800" fill="#4d6b38"/></svg></div>
<div class="sbi" style="top:498px">pi on raspberrypi.local</div>
<div class="ej" style="top:500px"><svg viewBox="0 0 8 8"><path d="M4 0L8 4.200H0zM0 5.300h8v1.900H0z" fill="#262626"/></svg></div>
<div class="sic" style="top:522px"><svg viewBox="0 0 16 16"><path d="M1 3.2q0-.9.9-.9h4.3l1 1.2h6.9q.9 0 .9.9v1.2H1z" fill="#f2f2f2" stroke="#3a3a3a" stroke-width=".5"/><rect x="1" y="5" width="14" height="9" rx=".8" fill="#8fb768" stroke="#3f4f33" stroke-width=".7"/><rect x="1.6" y="5.6" width="12.8" height="3.2" fill="#b3d196" opacity=".7"/><rect x="4.500" y="7.300" width="7" height="5.500" rx=".5" fill="#f2f2f2"/><rect x="6.300" y="9" width="3.400" height="2.800" fill="#4d6b38"/></svg></div>
<div class="sbi" style="top:523px">Network</div>
</div>
<div class="abs" style="left:204px;top:94px;width:5px;height:658px;background:linear-gradient(90deg,#cfcfcf,#dcdcdc 40%,#dcdcdc)"></div><div class="abs" style="left:205px;top:411px;width:3px;height:25px;background:radial-gradient(circle at 1.500px 1.500px,#b4b4b4 1.100px,transparent 1.400px) 0 0/3px 5.500px"></div>
<div id="list">
<div class="hd" style="left:0px;width:238px">Name</div>
<div class="hd" style="left:238px;width:123px">Size</div>
<div class="hd" style="left:361px;width:123px">Type</div>
<div class="hd" style="left:484px;width:122px">Date Modified</div>
<div class="hd" style="left:606px;width:122px">Group</div>
<div class="hd" style="left:728px;width:122px">Owner</div>
<div class="hd" style="left:850px;width:123px">Permissions</div>
<svg style="left:218px;top:8px;width:10px;height:6px" viewBox="0 0 10 6"><path d="M0 0h10L5 6z" fill="#2b2b2b"/></svg>
<div class="row" style="top:24px">
<svg class="e" style="left:3px" viewBox="0 0 10 10"><path d="M2 0.3L7.300 5L2 9.700z" fill="#1a1a1a"/></svg>
<svg class="f" style="left:15px" viewBox="0 0 16 16"><defs><linearGradient id="fg" x1="0" y1="0" x2="0" y2="1"><stop offset="0" stop-color="#b2cf92"/><stop offset=".25" stop-color="#9abb73"/><stop offset="1" stop-color="#7ca451"/></linearGradient></defs><path d="M.500 6V3.200Q.500 1.500 2.200 1.500H6.800Q7.800 1.500 8.300 2.500H14Q15.500 2.500 15.500 4V6z" fill="#f6f6f6" stroke="#b0b0b0" stroke-width=".8"/><path d="M1.300 4.200H14.700" stroke="#dcdcdc" stroke-width=".7"/><rect x=".500" y="5.300" width="15" height="9.400" rx=".6" fill="url(#fg)" stroke="#8b9b7c" stroke-width=".8"/><path d="M.500 14.700H15.500" stroke="#8a8a8a" stroke-width=".9"/></svg>
<div class="c" style="left:36px">bin</div>
<div class="c" style="left:244px;width:110px;text-align:right">--</div>
<div class="c" style="left:368px">Folder</div>
<div class="c" style="left:491px;width:113px;letter-spacing:0">2015-11-21 12:48:24</div>
<div class="c" style="left:613px">0</div>
<div class="c" style="left:735px">0</div>
<div class="c" style="left:857px;letter-spacing:.25px">drwxr-xr-x</div>
</div>
<div class="row" style="top:47px">
<svg class="e" style="left:3px" viewBox="0 0 10 10"><path d="M2 0.3L7.300 5L2 9.700z" fill="#1a1a1a"/></svg>
<svg class="f" style="left:15px" viewBox="0 0 16 16"><defs><linearGradient id="fg" x1="0" y1="0" x2="0" y2="1"><stop offset="0" stop-color="#b2cf92"/><stop offset=".25" stop-color="#9abb73"/><stop offset="1" stop-color="#7ca451"/></linearGradient></defs><path d="M.500 6V3.200Q.500 1.500 2.200 1.500H6.800Q7.800 1.500 8.300 2.500H14Q15.500 2.500 15.500 4V6z" fill="#f6f6f6" stroke="#b0b0b0" stroke-width=".8"/><path d="M1.300 4.200H14.700" stroke="#dcdcdc" stroke-width=".7"/><rect x=".500" y="5.300" width="15" height="9.400" rx=".6" fill="url(#fg)" stroke="#8b9b7c" stroke-width=".8"/><path d="M.500 14.700H15.500" stroke="#8a8a8a" stroke-width=".9"/></svg>
<div class="c" style="left:36px">boot</div>
<div class="c" style="left:244px;width:110px;text-align:right">--</div>
<div class="c" style="left:368px">Folder</div>
<div class="c" style="left:491px;width:113px;letter-spacing:0">unknown</div>
<div class="c" style="left:613px">0</div>
<div class="c" style="left:735px">0</div>
<div class="c" style="left:857px;letter-spacing:.25px">drwxr-xr-x</div>
</div>
<div class="row" style="top:70px">
<svg class="e" style="left:3px" viewBox="0 0 10 10"><path d="M2 0.3L7.300 5L2 9.700z" fill="#1a1a1a"/></svg>
<svg class="f" style="left:15px" viewBox="0 0 16 16"><defs><linearGradient id="fg" x1="0" y1="0" x2="0" y2="1"><stop offset="0" stop-color="#b2cf92"/><stop offset=".25" stop-color="#9abb73"/><stop offset="1" stop-color="#7ca451"/></linearGradient></defs><path d="M.500 6V3.200Q.500 1.500 2.200 1.500H6.800Q7.800 1.500 8.300 2.500H14Q15.500 2.500 15.500 4V6z" fill="#f6f6f6" stroke="#b0b0b0" stroke-width=".8"/><path d="M1.300 4.200H14.700" stroke="#dcdcdc" stroke-width=".7"/><rect x=".500" y="5.300" width="15" height="9.400" rx=".6" fill="url(#fg)" stroke="#8b9b7c" stroke-width=".8"/><path d="M.500 14.700H15.500" stroke="#8a8a8a" stroke-width=".9"/></svg>
<div class="c" style="left:36px">dev</div>
<div class="c" style="left:244px;width:110px;text-align:right">--</div>
<div class="c" style="left:368px">Folder</div>
<div class="c" style="left:491px;width:113px;letter-spacing:0">2016-02-04 14:38:32</div>
<div class="c" style="left:613px">0</div>
<div class="c" style="left:735px">0</div>
<div class="c" style="left:857px;letter-spacing:.25px">drwxr-xr-x</div>
</div>
<div class="row" style="top:93px">
<svg class="e" style="left:3px" viewBox="0 0 10 10"><path d="M2 0.3L7.300 5L2 9.700z" fill="#1a1a1a"/></svg>
<svg class="f" style="left:15px" viewBox="0 0 16 16"><defs><linearGradient id="fg" x1="0" y1="0" x2="0" y2="1"><stop offset="0" stop-color="#b2cf92"/><stop offset=".25" stop-color="#9abb73"/><stop offset="1" stop-color="#7ca451"/></linearGradient></defs><path d="M.500 6V3.200Q.500 1.500 2.200 1.500H6.800Q7.800 1.500 8.300 2.500H14Q15.500 2.500 15.500 4V6z" fill="#f6f6f6" stroke="#b0b0b0" stroke-width=".8"/><path d="M1.300 4.200H14.700" stroke="#dcdcdc" stroke-width=".7"/><rect x=".500" y="5.300" width="15" height="9.400" rx=".6" fill="url(#fg)" stroke="#8b9b7c" stroke-width=".8"/><path d="M.500 14.700H15.500" stroke="#8a8a8a" stroke-width=".9"/></svg>
<div class="c" style="left:36px">etc</div>
<div class="c" style="left:244px;width:110px;text-align:right">--</div>
<div class="c" style="left:368px">Folder</div>
<div class="c" style="left:491px;width:113px;letter-spacing:0">2015-11-21 13:36:15</div>
<div class="c" style="left:613px">0</div>
<div class="c" style="left:735px">0</div>
<div class="c" style="left:857px;letter-spacing:.25px">drwxr-xr-x</div>
</div>
<div class="row sel" style="top:116px">
<svg class="e" style="left:2.7px;top:7px" viewBox="0 0 10 10"><path d="M0 2.100H9.700L4.850 7.200z" fill="#fff"/></svg>
<svg class="f" style="left:15px" viewBox="0 0 16 16"><defs><linearGradient id="fg" x1="0" y1="0" x2="0" y2="1"><stop offset="0" stop-color="#b2cf92"/><stop offset=".25" stop-color="#9abb73"/><stop offset="1" stop-color="#7ca451"/></linearGradient></defs><path d="M.500 6V3.200Q.500 1.500 2.200 1.500H6.800Q7.800 1.500 8.300 2.500H14Q15.500 2.500 15.500 4V6z" fill="#f6f6f6" stroke="#b0b0b0" stroke-width=".8"/><path d="M1.300 4.200H14.700" stroke="#dcdcdc" stroke-width=".7"/><rect x=".500" y="5.300" width="15" height="9.400" rx=".6" fill="url(#fg)" stroke="#8b9b7c" stroke-width=".8"/><path d="M.500 14.700H15.500" stroke="#8a8a8a" stroke-width=".9"/></svg>
<div class="c" style="left:36px">home</div>
<div class="c" style="left:244px;width:110px;text-align:right">--</div>
<div class="c" style="left:368px">Folder</div>
<div class="c" style="left:491px;width:113px;letter-spacing:0">2015-11-21 12:32:11</div>
<div class="c" style="left:613px">0</div>
<div class="c" style="left:735px">0</div>
<div class="c" style="left:857px;letter-spacing:.25px">drwxr-xr-x</div>
</div>
<div class="row" style="top:139px">
<svg class="e" style="left:15.7px;top:7px" viewBox="0 0 10 10"><path d="M0 2.100H9.700L4.850 7.200z" fill="#1a1a1a"/></svg>
<svg class="f" style="left:28px" viewBox="0 0 16 16"><defs><linearGradient id="fg" x1="0" y1="0" x2="0" y2="1"><stop offset="0" stop-color="#b2cf92"/><stop offset=".25" stop-color="#9abb73"/><stop offset="1" stop-color="#7ca451"/></linearGradient></defs><path d="M.500 6V3.200Q.500 1.500 2.200 1.500H6.800Q7.800 1.500 8.300 2.500H14Q15.500 2.500 15.500 4V6z" fill="#f6f6f6" stroke="#b0b0b0" stroke-width=".8"/><path d="M1.300 4.200H14.700" stroke="#dcdcdc" stroke-width=".7"/><rect x=".500" y="5.300" width="15" height="9.400" rx=".6" fill="url(#fg)" stroke="#8b9b7c" stroke-width=".8"/><path d="M.500 14.700H15.500" stroke="#8a8a8a" stroke-width=".9"/></svg>
<div class="c" style="left:49px">pi</div>
<div class="c" style="left:244px;width:110px;text-align:right">--</div>
<div class="c" style="left:368px">Folder</div>
<div class="c" style="left:491px;width:113px;letter-spacing:0">2016-02-04 14:38:33</div>
<div class="c" style="left:613px">1000</div>
<div class="c" style="left:735px">1000</div>
<div class="c" style="left:857px;letter-spacing:.25px">drwxr-xr-x</div>
</div>
<div class="row" style="top:162px">
<svg class="e" style="left:29px" viewBox="0 0 10 10"><path d="M2 0.3L7.300 5L2 9.700z" fill="#1a1a1a"/></svg>
<svg class="f" style="left:41px" viewBox="0 0 16 16"><defs><linearGradient id="fg" x1="0" y1="0" x2="0" y2="1"><stop offset="0" stop-color="#b2cf92"/><stop offset=".25" stop-color="#9abb73"/><stop offset="1" stop-color="#7ca451"/></linearGradient></defs><path d="M.500 6V3.200Q.500 1.500 2.200 1.500H6.800Q7.800 1.500 8.300 2.500H14Q15.500 2.500 15.500 4V6z" fill="#f6f6f6" stroke="#b0b0b0" stroke-width=".8"/><path d="M1.300 4.200H14.700" stroke="#dcdcdc" stroke-width=".7"/><rect x=".500" y="5.300" width="15" height="9.400" rx=".6" fill="url(#fg)" stroke="#8b9b7c" stroke-width=".8"/><path d="M.500 14.700H15.500" stroke="#8a8a8a" stroke-width=".9"/></svg>
<div class="c" style="left:62px">Desktop</div>
<div class="c" style="left:244px;width:110px;text-align:right">--</div>
<div class="c" style="left:368px">Folder</div>
<div class="c" style="left:491px;width:113px;letter-spacing:0">2015-11-21 13:31:31</div>
<div class="c" style="left:613px">1000</div>
<div class="c" style="left:735px">1000</div>
<div class="c" style="left:857px;letter-spacing:.25px">drwxr-xr-x</div>
</div>
<div class="row" style="top:185px">
<svg class="e" style="left:29px" viewBox="0 0 10 10"><path d="M2 0.3L7.300 5L2 9.700z" fill="#1a1a1a"/></svg>
<svg class="f" style="left:41px" viewBox="0 0 16 16"><defs><linearGradient id="fg" x1="0" y1="0" x2="0" y2="1"><stop offset="0" stop-color="#b2cf92"/><stop offset=".25" stop-color="#9abb73"/><stop offset="1" stop-color="#7ca451"/></linearGradient></defs><path d="M.500 6V3.200Q.500 1.500 2.200 1.500H6.800Q7.800 1.500 8.300 2.500H14Q15.500 2.500 15.500 4V6z" fill="#f6f6f6" stroke="#b0b0b0" stroke-width=".8"/><path d="M1.300 4.200H14.700" stroke="#dcdcdc" stroke-width=".7"/><rect x=".500" y="5.300" width="15" height="9.400" rx=".6" fill="url(#fg)" stroke="#8b9b7c" stroke-width=".8"/><path d="M.500 14.700H15.500" stroke="#8a8a8a" stroke-width=".9"/></svg>
<div class="c" style="left:62px">Documents</div>
<div class="c" style="left:244px;width:110px;text-align:right">--</div>
<div class="c" style="left:368px">Folder</div>
<div class="c" style="left:491px;width:113px;letter-spacing:0">2015-11-21 13:31:30</div>
<div class="c" style="left:613px">1000</div>
<div class="c" style="left:735px">1000</div>
<div class="c" style="left:857px;letter-spacing:.25px">drwxr-xr-x</div>
</div>
<div class="row" style="top:208px">
<svg class="e" style="left:29px" viewBox="0 0 10 10"><path d="M2 0.3L7.300 5L2 9.700z" fill="#1a1a1a"/></svg>
<svg class="f" style="left:41px" viewBox="0 0 16 16"><defs><linearGradient id="fg" x1="0" y1="0" x2="0" y2="1"><stop offset="0" stop-color="#b2cf92"/><stop offset=".25" stop-color="#9abb73"/><stop offset="1" stop-color="#7ca451"/></linearGradient></defs><path d="M.500 6V3.200Q.500 1.500 2.200 1.500H6.800Q7.800 1.500 8.300 2.500H14Q15.500 2.500 15.500 4V6z" fill="#f6f6f6" stroke="#b0b0b0" stroke-width=".8"/><path d="M1.300 4.200H14.700" stroke="#dcdcdc" stroke-width=".7"/><rect x=".500" y="5.300" width="15" height="9.400" rx=".6" fill="url(#fg)" stroke="#8b9b7c" stroke-width=".8"/><path d="M.500 14.700H15.500" stroke="#8a8a8a" stroke-width=".9"/></svg>
<div class="c" style="left:62px">Downloads</div>
<div class="c" style="left:244px;width:110px;text-align:right">--</div>
<div class="c" style="left:368px">Folder</div>
<div class="c" style="left:491px;width:113px;letter-spacing:0">2016-02-04 10:59:57</div>
<div class="c" style="left:613px">1000</div>
<div class="c" style="left:735px">1000</div>
<div class="c" style="left:857px;letter-spacing:.25px">drwxr-xr-x</div>
</div>
<div class="row" style="top:231px">
<svg class="e" style="left:29px" viewBox="0 0 10 10"><path d="M2 0.3L7.300 5L2 9.700z" fill="#1a1a1a"/></svg>
<svg class="f" style="left:41px" viewBox="0 0 16 16"><defs><linearGradient id="fg" x1="0" y1="0" x2="0" y2="1"><stop offset="0" stop-color="#b2cf92"/><stop offset=".25" stop-color="#9abb73"/><stop offset="1" stop-color="#7ca451"/></linearGradient></defs><path d="M.500 6V3.200Q.500 1.500 2.200 1.500H6.800Q7.800 1.500 8.300 2.500H14Q15.500 2.500 15.500 4V6z" fill="#f6f6f6" stroke="#b0b0b0" stroke-width=".8"/><path d="M1.300 4.200H14.700" stroke="#dcdcdc" stroke-width=".7"/><rect x=".500" y="5.300" width="15" height="9.400" rx=".6" fill="url(#fg)" stroke="#8b9b7c" stroke-width=".8"/><path d="M.500 14.700H15.500" stroke="#8a8a8a" stroke-width=".9"/></svg>
<div class="c" style="left:62px">Music</div>
<div class="c" style="left:244px;width:110px;text-align:right">--</div>
<div class="c" style="left:368px">Folder</div>
<div class="c" style="left:491px;width:113px;letter-spacing:0">2016-02-04 10:59:57</div>
<div class="c" style="left:613px">1000</div>
<div class="c" style="left:735px">1000</div>
<div class="c" style="left:857px;letter-spacing:.25px">drwxr-xr-x</div>
</div>
<div class="row" style="top:254px">
<svg class="e" style="left:29px" viewBox="0 0 10 10"><path d="M2 0.3L7.300 5L2 9.700z" fill="#1a1a1a"/></svg>
<svg class="f" style="left:41px" viewBox="0 0 16 16"><defs><linearGradient id="fg" x1="0" y1="0" x2="0" y2="1"><stop offset="0" stop-color="#b2cf92"/><stop offset=".25" stop-color="#9abb73"/><stop offset="1" stop-color="#7ca451"/></linearGradient></defs><path d="M.500 6V3.200Q.500 1.500 2.200 1.500H6.800Q7.800 1.500 8.300 2.500H14Q15.500 2.500 15.500 4V6z" fill="#f6f6f6" stroke="#b0b0b0" stroke-width=".8"/><path d="M1.300 4.200H14.700" stroke="#dcdcdc" stroke-width=".7"/><rect x=".500" y="5.300" width="15" height="9.400" rx=".6" fill="url(#fg)" stroke="#8b9b7c" stroke-width=".8"/><path d="M.500 14.700H15.500" stroke="#8a8a8a" stroke-width=".9"/></svg>
<div class="c" style="left:62px">Pictures</div>
<div class="c" style="left:244px;width:110px;text-align:right">--</div>
<div class="c" style="left:368px">Folder</div>
<div class="c" style="left:491px;width:113px;letter-spacing:0">2016-02-04 10:59:57</div>
<div class="c" style="left:613px">1000</div>
<div class="c" style="left:735px">1000</div>
<div class="c" style="left:857px;letter-spacing:.25px">drwxr-xr-x</div>
</div>
<div class="row" style="top:277px">
<svg class="e" style="left:29px" viewBox="0 0 10 10"><path d="M2 0.3L7.300 5L2 9.700z" fill="#1a1a1a"/></svg>
<svg class="f" style="left:41px" viewBox="0 0 16 16"><defs><linearGradient id="fg" x1="0" y1="0" x2="0" y2="1"><stop offset="0" stop-color="#b2cf92"/><stop offset=".25" stop-color="#9abb73"/><stop offset="1" stop-color="#7ca451"/></linearGradient></defs><path d="M.500 6V3.200Q.500 1.500 2.200 1.500H6.800Q7.800 1.500 8.300 2.500H14Q15.500 2.500 15.500 4V6z" fill="#f6f6f6" stroke="#b0b0b0" stroke-width=".8"/><path d="M1.300 4.200H14.700" stroke="#dcdcdc" stroke-width=".7"/><rect x=".500" y="5.300" width="15" height="9.400" rx=".6" fill="url(#fg)" stroke="#8b9b7c" stroke-width=".8"/><path d="M.500 14.700H15.500" stroke="#8a8a8a" stroke-width=".9"/></svg>
<div class="c" style="left:62px">Public</div>
<div class="c" style="left:244px;width:110px;text-align:right">--</div>
<div class="c" style="left:368px">Folder</div>
<div class="c" style="left:491px;width:113px;letter-spacing:0">2016-02-04 10:59:57</div>
<div class="c" style="left:613px">1000</div>
<div class="c" style="left:735px">1000</div>
<div class="c" style="left:857px;letter-spacing:.25px">drwxr-xr-x</div>
</div>
<div class="row" style="top:300px">
<svg class="e" style="left:29px" viewBox="0 0 10 10"><path d="M2 0.3L7.300 5L2 9.700z" fill="#1a1a1a"/></svg>
<svg class="f" style="left:41px" viewBox="0 0 16 16"><defs><linearGradient id="fg" x1="0" y1="0" x2="0" y2="1"><stop offset="0" stop-color="#b2cf92"/><stop offset=".25" stop-color="#9abb73"/><stop offset="1" stop-color="#7ca451"/></linearGradient></defs><path d="M.500 6V3.200Q.500 1.500 2.200 1.500H6.800Q7.800 1.500 8.300 2.500H14Q15.500 2.500 15.500 4V6z" fill="#f6f6f6" stroke="#b0b0b0" stroke-width=".8"/><path d="M1.300 4.200H14.700" stroke="#dcdcdc" stroke-width=".7"/><rect x=".500" y="5.300" width="15" height="9.400" rx=".6" fill="url(#fg)" stroke="#8b9b7c" stroke-width=".8"/><path d="M.500 14.700H15.500" stroke="#8a8a8a" stroke-width=".9"/></svg>
<div class="c" style="left:62px">python_games</div>
<div class="c" style="left:244px;width:110px;text-align:right">--</div>
<div class="c" style="left:368px">Folder</div>
<div class="c" style="left:491px;width:113px;letter-spacing:0">2015-11-21 13:31:29</div>
<div class="c" style="left:613px">1000</div>
<div class="c" style="left:735px">1000</div>
<div class="c" style="left:857px;letter-spacing:.25px">drwxr-xr-x</div>
</div>
<div class="row" style="top:323px">
<svg class="e" style="left:29px" viewBox="0 0 10 10"><path d="M2 0.3L7.300 5L2 9.700z" fill="#1a1a1a"/></svg>
<svg class="f" style="left:41px" viewBox="0 0 16 16"><defs><linearGradient id="fg" x1="0" y1="0" x2="0" y2="1"><stop offset="0" stop-color="#b2cf92"/><stop offset=".25" stop-color="#9abb73"/><stop offset="1" stop-color="#7ca451"/></linearGradient></defs><path d="M.500 6V3.200Q.500 1.500 2.200 1.500H6.800Q7.800 1.500 8.300 2.500H14Q15.500 2.500 15.500 4V6z" fill="#f6f6f6" stroke="#b0b0b0" stroke-width=".8"/><path d="M1.300 4.200H14.700" stroke="#dcdcdc" stroke-width=".7"/><rect x=".500" y="5.300" width="15" height="9.400" rx=".6" fill="url(#fg)" stroke="#8b9b7c" stroke-width=".8"/><path d="M.500 14.700H15.500" stroke="#8a8a8a" stroke-width=".9"/></svg>
<div class="c" style="left:62px">Templates</div>
<div class="c" style="left:244px;width:110px;text-align:right">--</div>
<div class="c" style="left:368px">Folder</div>
<div class="c" style="left:491px;width:113px;letter-spacing:0">2016-02-04 10:59:57</div>
<div class="c" style="left:613px">1000</div>
<div class="c" style="left:735px">1000</div>
<div class="c" style="left:857px;letter-spacing:.25px">drwxr-xr-x</div>
</div>
<div class="row" style="top:346px">
<svg class="e" style="left:29px" viewBox="0 0 10 10"><path d="M2 0.3L7.300 5L2 9.700z" fill="#1a1a1a"/></svg>
<svg class="f" style="left:41px" viewBox="0 0 16 16"><defs><linearGradient id="fg" x1="0" y1="0" x2="0" y2="1"><stop offset="0" stop-color="#b2cf92"/><stop offset=".25" stop-color="#9abb73"/><stop offset="1" stop-color="#7ca451"/></linearGradient></defs><path d="M.500 6V3.200Q.500 1.500 2.200 1.500H6.800Q7.800 1.500 8.300 2.500H14Q15.500 2.500 15.500 4V6z" fill="#f6f6f6" stroke="#b0b0b0" stroke-width=".8"/><path d="M1.300 4.200H14.700" stroke="#dcdcdc" stroke-width=".7"/><rect x=".500" y="5.300" width="15" height="9.400" rx=".6" fill="url(#fg)" stroke="#8b9b7c" stroke-width=".8"/><path d="M.500 14.700H15.500" stroke="#8a8a8a" stroke-width=".9"/></svg>
<div class="c" style="left:62px">Videos</div>
<div class="c" style="left:244px;width:110px;text-align:right">--</div>
<div class="c" style="left:368px">Folder</div>
<div class="c" style="left:491px;width:113px;letter-spacing:0">2016-02-04 10:59:57</div>
<div class="c" style="left:613px">1000</div>
<div class="c" style="left:735px">1000</div>
<div class="c" style="left:857px;letter-spacing:.25px">drwxr-xr-x</div>
</div>
<div class="row" style="top:369px">
<svg class="e" style="left:29px" viewBox="0 0 10 10"><path d="M2 0.3L7.300 5L2 9.700z" fill="#1a1a1a"/></svg>
<svg class="f" style="left:41px" viewBox="0 0 16 16"><defs><linearGradient id="fg" x1="0" y1="0" x2="0" y2="1"><stop offset="0" stop-color="#b2cf92"/><stop offset=".25" stop-color="#9abb73"/><stop offset="1" stop-color="#7ca451"/></linearGradient></defs><path d="M.500 6V3.200Q.500 1.500 2.200 1.500H6.800Q7.800 1.500 8.300 2.500H14Q15.500 2.500 15.500 4V6z" fill="#f6f6f6" stroke="#b0b0b0" stroke-width=".8"/><path d="M1.300 4.200H14.700" stroke="#dcdcdc" stroke-width=".7"/><rect x=".500" y="5.300" width="15" height="9.400" rx=".6" fill="url(#fg)" stroke="#8b9b7c" stroke-width=".8"/><path d="M.500 14.700H15.500" stroke="#8a8a8a" stroke-width=".9"/></svg>
<div class="c" style="left:62px">.cache</div>
<div class="c" style="left:244px;width:110px;text-align:right">--</div>
<div class="c" style="left:368px">Folder</div>
<div class="c" style="left:491px;width:113px;letter-spacing:0">2016-02-04 11:00:08</div>
<div class="c" style="left:613px">1000</div>
<div class="c" style="left:735px">1000</div>
<div class="c" style="left:857px;letter-spacing:.25px">drwxr-xr-x</div>
</div>
<div class="row" style="top:392px">
<svg class="e" style="left:29px" viewBox="0 0 10 10"><path d="M2 0.3L7.300 5L2 9.700z" fill="#1a1a1a"/></svg>
<svg class="f" style="left:41px" viewBox="0 0 16 16"><defs><linearGradient id="fg" x1="0" y1="0" x2="0" y2="1"><stop offset="0" stop-color="#b2cf92"/><stop offset=".25" stop-color="#9abb73"/><stop offset="1" stop-color="#7ca451"/></linearGradient></defs><path d="M.500 6V3.200Q.500 1.500 2.200 1.500H6.800Q7.800 1.500 8.300 2.500H14Q15.500 2.500 15.500 4V6z" fill="#f6f6f6" stroke="#b0b0b0" stroke-width=".8"/><path d="M1.300 4.200H14.700" stroke="#dcdcdc" stroke-width=".7"/><rect x=".500" y="5.300" width="15" height="9.400" rx=".6" fill="url(#fg)" stroke="#8b9b7c" stroke-width=".8"/><path d="M.500 14.700H15.500" stroke="#8a8a8a" stroke-width=".9"/></svg>
<div class="c" style="left:62px">.config</div>
<div class="c" style="left:244px;width:110px;text-align:right">--</div>
<div class="c" style="left:368px">Folder</div>
<div class="c" style="left:491px;width:113px;letter-spacing:0">2016-02-04 10:59:57</div>
<div class="c" style="left:613px">1000</div>
<div class="c" style="left:735px">1000</div>
<div class="c" style="left:857px;letter-spacing:.25px">drwxr-xr-x</div>
</div>
<div class="row" style="top:415px">
<svg class="e" style="left:29px" viewBox="0 0 10 10"><path d="M2 0.3L7.300 5L2 9.700z" fill="#1a1a1a"/></svg>
<svg class="f" style="left:41px" viewBox="0 0 16 16"><defs><linearGradient id="fg" x1="0" y1="0" x2="0" y2="1"><stop offset="0" stop-color="#b2cf92"/><stop offset=".25" stop-color="#9abb73"/><stop offset="1" stop-color="#7ca451"/></linearGradient></defs><path d="M.500 6V3.200Q.500 1.500 2.200 1.500H6.800Q7.800 1.500 8.300 2.500H14Q15.500 2.500 15.500 4V6z" fill="#f6f6f6" stroke="#b0b0b0" stroke-width=".8"/><path d="M1.300 4.200H14.700" stroke="#dcdcdc" stroke-width=".7"/><rect x=".500" y="5.300" width="15" height="9.400" rx=".6" fill="url(#fg)" stroke="#8b9b7c" stroke-width=".8"/><path d="M.500 14.700H15.500" stroke="#8a8a8a" stroke-width=".9"/></svg>
<div class="c" style="left:62px">.dbus</div>
<div class="c" style="left:244px;width:110px;text-align:right">--</div>
<div class="c" style="left:368px">Folder</div>
<div class="c" style="left:491px;width:113px;letter-spacing:0">2016-02-04 10:59:58</div>
<div class="c" style="left:613px">1000</div>
<div class="c" style="left:735px">1000</div>
<div class="c" style="left:857px;letter-spacing:.25px">drwx------</div>
</div>
<div class="row" style="top:438px">
<svg class="e" style="left:29px" viewBox="0 0 10 10"><path d="M2 0.3L7.300 5L2 9.700z" fill="#1a1a1a"/></svg>
<svg class="f" style="left:41px" viewBox="0 0 16 16"><defs><linearGradient id="fg" x1="0" y1="0" x2="0" y2="1"><stop offset="0" stop-color="#b2cf92"/><stop offset=".25" stop-color="#9abb73"/><stop offset="1" stop-color="#7ca451"/></linearGradient></defs><path d="M.500 6V3.200Q.500 1.500 2.200 1.500H6.800Q7.800 1.500 8.300 2.500H14Q15.500 2.500 15.500 4V6z" fill="#f6f6f6" stroke="#b0b0b0" stroke-width=".8"/><path d="M1.300 4.200H14.700" stroke="#dcdcdc" stroke-width=".7"/><rect x=".500" y="5.300" width="15" height="9.400" rx=".6" fill="url(#fg)" stroke="#8b9b7c" stroke-width=".8"/><path d="M.500 14.700H15.500" stroke="#8a8a8a" stroke-width=".9"/></svg>
<div class="c" style="left:62px">.fontconfig</div>
<div class="c" style="left:244px;width:110px;text-align:right">--</div>
<div class="c" style="left:368px">Folder</div>
<div class="c" style="left:491px;width:113px;letter-spacing:0">2016-02-04 11:00:08</div>
<div class="c" style="left:613px">1000</div>
<div class="c" style="left:735px">1000</div>
<div class="c" style="left:857px;letter-spacing:.25px">drwxr-xr-x</div>
</div>
<div class="row" style="top:461px">
<svg class="e" style="left:29px" viewBox="0 0 10 10"><path d="M2 0.3L7.300 5L2 9.700z" fill="#1a1a1a"/></svg>
<svg class="f" style="left:41px" viewBox="0 0 16 16"><defs><linearGradient id="fg" x1="0" y1="0" x2="0" y2="1"><stop offset="0" stop-color="#b2cf92"/><stop offset=".25" stop-color="#9abb73"/><stop offset="1" stop-color="#7ca451"/></linearGradient></defs><path d="M.500 6V3.200Q.500 1.500 2.200 1.500H6.800Q7.800 1.500 8.300 2.500H14Q15.500 2.500 15.500 4V6z" fill="#f6f6f6" stroke="#b0b0b0" stroke-width=".8"/><path d="M1.300 4.200H14.700" stroke="#dcdcdc" stroke-width=".7"/><rect x=".500" y="5.300" width="15" height="9.400" rx=".6" fill="url(#fg)" stroke="#8b9b7c" stroke-width=".8"/><path d="M.500 14.700H15.500" stroke="#8a8a8a" stroke-width=".9"/></svg>
<div class="c" style="left:62px">.gstreamer-0.10</div>
<div class="c" style="left:244px;width:110px;text-align:right">--</div>
<div class="c" style="left:368px">Folder</div>
<div class="c" style="left:491px;width:113px;letter-spacing:0">2016-02-04 11:00:13</div>
<div class="c" style="left:613px">1000</div>
<div class="c" style="left:735px">1000</div>
<div class="c" style="left:857px;letter-spacing:.25px">drwxr-xr-x</div>
</div>
<div class="row" style="top:484px">
<svg class="e" style="left:29px" viewBox="0 0 10 10"><path d="M2 0.3L7.300 5L2 9.700z" fill="#1a1a1a"/></svg>
<svg class="f" style="left:41px" viewBox="0 0 16 16"><defs><linearGradient id="fg" x1="0" y1="0" x2="0" y2="1"><stop offset="0" stop-color="#b2cf92"/><stop offset=".25" stop-color="#9abb73"/><stop offset="1" stop-color="#7ca451"/></linearGradient></defs><path d="M.500 6V3.200Q.500 1.500 2.200 1.500H6.800Q7.800 1.500 8.300 2.500H14Q15.500 2.500 15.500 4V6z" fill="#f6f6f6" stroke="#b0b0b0" stroke-width=".8"/><path d="M1.300 4.200H14.700" stroke="#dcdcdc" stroke-width=".7"/><rect x=".500" y="5.300" width="15" height="9.400" rx=".6" fill="url(#fg)" stroke="#8b9b7c" stroke-width=".8"/><path d="M.500 14.700H15.500" stroke="#8a8a8a" stroke-width=".9"/></svg>
<div class="c" style="left:62px;text-decoration:underline">.local</div>
<div class="c" style="left:244px;width:110px;text-align:right">--</div>
<div class="c" style="left:368px">Folder</div>
<div class="c" style="left:491px;width:113px;letter-spacing:0">2015-11-21 13:31:30</div>
<div class="c" style="left:613px">1000</div>
<div class="c" style="left:735px">1000</div>
<div class="c" style="left:857px;letter-spacing:.25px">drwxr-xr-x</div>
</div>
<div class="row" style="top:507px">
<svg class="e" style="left:29px" viewBox="0 0 10 10"><path d="M2 0.3L7.300 5L2 9.700z" fill="#1a1a1a"/></svg>
<svg class="f" style="left:41px" viewBox="0 0 16 16"><defs><linearGradient id="fg" x1="0" y1="0" x2="0" y2="1"><stop offset="0" stop-color="#b2cf92"/><stop offset=".25" stop-color="#9abb73"/><stop offset="1" stop-color="#7ca451"/></linearGradient></defs><path d="M.500 6V3.200Q.500 1.500 2.200 1.500H6.800Q7.800 1.500 8.300 2.500H14Q15.500 2.500 15.500 4V6z" fill="#f6f6f6" stroke="#b0b0b0" stroke-width=".8"/><path d="M1.300 4.200H14.700" stroke="#dcdcdc" stroke-width=".7"/><rect x=".500" y="5.300" width="15" height="9.400" rx=".6" fill="url(#fg)" stroke="#8b9b7c" stroke-width=".8"/><path d="M.500 14.700H15.500" stroke="#8a8a8a" stroke-width=".9"/></svg>
<div class="c" style="left:62px">.themes</div>
<div class="c" style="left:244px;width:110px;text-align:right">--</div>
<div class="c" style="left:368px">Folder</div>
<div class="c" style="left:491px;width:113px;letter-spacing:0">2015-11-21 13:31:31</div>
<div class="c" style="left:613px">1000</div>
<div class="c" style="left:735px">1000</div>
<div class="c" style="left:857px;letter-spacing:.25px">drwxr-xr-x</div>
</div>
<div class="row" style="top:530px">
<svg class="f" style="left:41px" viewBox="0 0 16 16"><rect x="1" y="1" width="14" height="14" rx="1.800" fill="#f4f4f4" stroke="#a8a8a8" stroke-width=".9"/><text x="8" y="7.300" font-family="Liberation Mono,monospace" font-size="7.400" font-weight="bold" text-anchor="middle" fill="#a2a2a2">01</text><text x="8" y="13" font-family="Liberation Mono,monospace" font-size="7.400" font-weight="bold" text-anchor="middle" fill="#a2a2a2">10</text></svg>
<div class="c" style="left:62px">.asoundrc</div>
<div class="c" style="left:244px;width:110px;text-align:right">69 bytes</div>
<div class="c" style="left:368px">Binary</div>
<div class="c" style="left:491px;width:113px;letter-spacing:0">2016-02-04 11:00:13</div>
<div class="c" style="left:613px">1000</div>
<div class="c" style="left:735px">1000</div>
<div class="c" style="left:857px;letter-spacing:.25px">-rw-r--r--</div>
</div>
<div class="row" style="top:553px">
<svg class="f" style="left:41px" viewBox="0 0 16 16"><rect x="1" y="1" width="14" height="14" rx="1.800" fill="#f4f4f4" stroke="#a8a8a8" stroke-width=".9"/><text x="8" y="7.300" font-family="Liberation Mono,monospace" font-size="7.400" font-weight="bold" text-anchor="middle" fill="#a2a2a2">01</text><text x="8" y="13" font-family="Liberation Mono,monospace" font-size="7.400" font-weight="bold" text-anchor="middle" fill="#a2a2a2">10</text></svg>
<div class="c" style="left:62px">.bash_history</div>
<div class="c" style="left:244px;width:110px;text-align:right">108 bytes</div>
<div class="c" style="left:368px">Binary</div>
<div class="c" style="left:491px;width:113px;letter-spacing:0">2016-02-04 14:38:22</div>
<div class="c" style="left:613px">1000</div>
<div class="c" style="left:735px">1000</div>
<div class="c" style="left:857px;letter-spacing:.25px">-rw-------</div>
</div>
<div class="row" style="top:576px">
<svg class="f" style="left:41px" viewBox="0 0 16 16"><rect x="1" y="1" width="14" height="14" rx="1.800" fill="#f4f4f4" stroke="#a8a8a8" stroke-width=".9"/><text x="8" y="7.300" font-family="Liberation Mono,monospace" font-size="7.400" font-weight="bold" text-anchor="middle" fill="#a2a2a2">01</text><text x="8" y="13" font-family="Liberation Mono,monospace" font-size="7.400" font-weight="bold" text-anchor="middle" fill="#a2a2a2">10</text></svg>
<div class="c" style="left:62px">.bash_logout</div>
<div class="c" style="left:244px;width:110px;text-align:right">220 bytes</div>
<div class="c" style="left:368px">Binary</div>
<div class="c" style="left:491px;width:113px;letter-spacing:0">2015-11-21 12:32:11</div>
<div class="c" style="left:613px">1000</div>
<div class="c" style="left:735px">1000</div>
<div class="c" style="left:857px;letter-spacing:.25px">-rw-r--r--</div>
</div>
<div class="row" style="top:599px">
<svg class="f" style="left:41px" viewBox="0 0 16 16"><rect x="1" y="1" width="14" height="14" rx="1.800" fill="#f4f4f4" stroke="#a8a8a8" stroke-width=".9"/><text x="8" y="7.300" font-family="Liberation Mono,monospace" font-size="7.400" font-weight="bold" text-anchor="middle" fill="#a2a2a2">01</text><text x="8" y="13" font-family="Liberation Mono,monospace" font-size="7.400" font-weight="bold" text-anchor="middle" fill="#a2a2a2">10</text></svg>
<div class="c" style="left:62px">.bashrc</div>
<div class="c" style="left:244px;width:110px;text-align:right">3.5 kB</div>
<div class="c" style="left:368px">Binary</div>
<div class="c" style="left:491px;width:113px;letter-spacing:0">2015-11-21 12:32:11</div>
<div class="c" style="left:613px">1000</div>
<div class="c" style="left:735px">1000</div>
<div class="c" style="left:857px;letter-spacing:.25px">-rw-r--r--</div>
</div>
<div class="row" style="top:622px">
<svg class="f" style="left:41px" viewBox="0 0 16 16"><rect x="1" y="1" width="14" height="14" rx="1.800" fill="#f4f4f4" stroke="#a8a8a8" stroke-width=".9"/><text x="8" y="7.300" font-family="Liberation Mono,monospace" font-size="7.400" font-weight="bold" text-anchor="middle" fill="#a2a2a2">01</text><text x="8" y="13" font-family="Liberation Mono,monospace" font-size="7.400" font-weight="bold" text-anchor="middle" fill="#a2a2a2">10</text></svg>
<div class="c" style="left:62px">.profile</div>
<div class="c" style="left:244px;width:110px;text-align:right">675 bytes</div>
<div class="c" style="left:368px">Binary</div>
<div class="c" style="left:491px;width:113px;letter-spacing:0">2015-11-21 12:32:11</div>
<div class="c" style="left:613px">1000</div>
<div class="c" style="left:735px">1000</div>
<div class="c" style="left:857px;letter-spacing:.25px">-rw-r--r--</div>
</div>
<div class="row" style="top:645px">
<svg class="f" style="left:41px" viewBox="0 0 16 16"><rect x="1" y="1" width="14" height="14" rx="1.800" fill="#f4f4f4" stroke="#a8a8a8" stroke-width=".9"/><text x="8" y="7.300" font-family="Liberation Mono,monospace" font-size="7.400" font-weight="bold" text-anchor="middle" fill="#a2a2a2">01</text><text x="8" y="13" font-family="Liberation Mono,monospace" font-size="7.400" font-weight="bold" text-anchor="middle" fill="#a2a2a2">10</text></svg>
<div class="c" style="left:62px">.Xauthority</div>
<div class="c" style="left:244px;width:110px;text-align:right">56 bytes</div>
<div class="c" style="left:368px">Binary</div>
<div class="c" style="left:491px;width:113px;letter-spacing:0">2016-02-04 14:38:33</div>
<div class="c" style="left:613px">1000</div>
<div class="c" style="left:735px">1000</div>
<div class="c" style="left:857px;letter-spacing:.25px">-rw-------</div>
</div>
</div>
<div class="abs" style="left:1181px;top:95px;width:14px;height:657px;background:linear-gradient(90deg,#b8b8b8 0,#d4d4d4 1px,#e4e4e4 50%,#ececec)"></div>
<div class="abs" style="left:1184px;top:97px;width:9px;height:409px;border:1px solid #a2a2a2;border-radius:5px;background:linear-gradient(90deg,#fbfbfb,#e4e4e4)"></div>
<svg style="left:514px;top:599px;width:16px;height:16px;filter:drop-shadow(1px 1px 1px rgba(0,0,0,.35))" viewBox="0 0 16 16"><path d="M3.500 9V1.800Q3.500 .600 5 .600Q6.500 .600 6.500 1.800V5.200Q8 4.600 9.500 5.700Q11.500 5.500 12.500 7Q15.500 7 15.500 9.500V13.500Q15.500 15.500 13.500 15.500H2.500Q.600 15.500 .600 13.500V9.500Q.600 7.600 2 7.600Q3.500 7.600 3.500 9z" fill="#fff" stroke="#0a0a0a" stroke-width="1.300"/><path d="M5 11.300h1.600M8 11.300h1.600M11 11.300h1.600" stroke="#9a9a9a" stroke-width=".9"/></svg>
<div id="status">
<div class="sb" style="left:8px;background:#b6b6b6;border-color:#8c8c8c;box-shadow:inset 0 1px 2px rgba(0,0,0,.25)"><svg viewBox="0 0 13 13"><path d="M0.500 2.300h4.300l1 1.200H12.500v1.800H3L0.500 11z" fill="#333"/><path d="M3.300 6h9.200v5.500H1z" fill="#333"/></svg></div>
<div class="sb" style="left:35px"><svg viewBox="0 0 13 13"><circle cx="3" cy="2.300" r="1.600" fill="#333"/><path d="M3 3v8h5M3 7h4" fill="none" stroke="#333" stroke-width="1.200"/><path d="M7.500 5.300l3 1.700l-3 1.700zM8.500 9.300l3 1.700l-3 1.700z" fill="#333"/></svg></div>
<div class="abs" style="left:65px;top:3px;width:1px;height:22px;background:#bcbcbc"></div>
<div class="sb" style="left:76px"><svg viewBox="0 0 13 13"><rect x="1" y="2" width="11" height="9" rx="1" fill="none" stroke="#222" stroke-width="1.500"/><path d="M2.500 6.500L6 3.800v5.400z" fill="#222"/></svg></div>
<div class="t" style="left:293px;width:600px;text-align:center;top:7px;color:#2b2b2b">"home" selected, Free space: 103.5 MB</div>
<div class="abs" style="left:1094px;top:12px;width:94px;height:5px;border:1px solid #a4a4a4;border-radius:2px;background:#cfcfcf"></div>
<div class="abs" style="left:1094px;top:12px;width:14px;height:5px;border-radius:2px;background:#9ab87c;border:1px solid #7f9d62"></div>
<div class="abs" style="left:1106px;top:8px;width:14px;height:14px;border:1px solid #9a9a9a;border-radius:7px;background:linear-gradient(#fdfdfd,#e0e0e0)"></div>
</div>
<div class="abs" style="left:0;top:0;width:1198px;height:784px;border:1px solid #8e8e8e;border-radius:5px 5px 0 0"></div>
</div>

<div id="panel">
<div class="abs" style="left:5px;top:7px;width:5px;height:18px;background:linear-gradient(135deg,#8e8e8e 0 25%,transparent 25% 50%,#fff 50% 75%,transparent 75%) 0 0/3px 3px"></div>
<svg style="left:18px;top:5px;width:24.500px;height:21.500px" viewBox="0 0 24.500 21.500"><defs><linearGradient id="mg" x1="0" y1="0" x2="1" y2="1"><stop offset="0" stop-color="#b4e67e"/><stop offset="1" stop-color="#7cbf3c"/></linearGradient></defs><path d="M0 0H16Q24.500 0 24.500 8.500V21.500H12.500Q3.500 21.500 3.500 12.500V6.500H0z" fill="#fdfdfd"/><path d="M1.600 1.500H16Q23 1.500 23 8.500V20H12.500Q5 20 5 12.500V5H1.600z" fill="url(#mg)"/><path d="M7.800 4V13Q7.800 17.400 12.200 17.400H17Q20.800 17.400 20.800 13.600V9.500Q20.800 6.600 18.200 6.600Q15.600 6.600 15.600 9.500V12.800M15.600 9.500Q15.600 6.600 13 6.600Q10.500 6.600 10.500 9.500V12.800" fill="none" stroke="#fff" stroke-width="1.600"/></svg>
<svg style="left:53px;top:7px;width:22px;height:18px" viewBox="0 0 22 18"><rect x=".5" y=".5" width="21" height="17" rx="1" fill="#8cb465" stroke="#3a3f3a" stroke-width="1"/><rect x="1" y="1" width="20" height="2.200" fill="#f4f4f4"/><rect x=".5" y="3.200" width="21" height=".8" fill="#4a4a4a"/><rect x="4" y="13" width="13.800" height="4.500" fill="#4a6a32"/><rect x="4" y="13" width="13.800" height="1" fill="#3a5228"/></svg>
<div class="tk" style="left:82px"><svg viewBox="0 0 16 16"><ellipse cx="8" cy="7.500" rx="4.400" ry="5.200" fill="#cdbfae"/><path d="M1 6l3 2l-3 4M15 6l-3 2l3 4M2 13l3-3M14 13l-3-3" stroke="#cfc6ba" stroke-width=".9" fill="none"/><circle cx="6.500" cy="6.300" r="1.100" fill="#f0ebe2"/><circle cx="9.500" cy="6.300" r="1.100" fill="#f0ebe2"/></svg>[Arachnophilia 5.5]</div>
<div class="tk act" style="left:282px"><svg viewBox="0 0 16 16"><path d="M1 3.200q0-.9.9-.9h4.300l1 1.200h6.900q.9 0 .9.900v1.200H1z" fill="#f2f2f2" stroke="#8a8a8a" stroke-width=".6"/><rect x="1" y="5" width="14" height="9.500" rx=".8" fill="#8fb768" stroke="#4f6b3a" stroke-width=".7"/><rect x="4.500" y="7.300" width="7" height="5.700" rx=".5" fill="#f2f2f2"/><rect x="6.300" y="9" width="3.400" height="2.800" fill="#3f5a2c"/></svg>/ on raspberrypi.local</div>
<div class="tk" style="left:482px"><svg viewBox="0 0 16 16"><rect x="1" y="1.500" width="14" height="11" rx="1" fill="#dfe6f2" stroke="#7a8cab" stroke-width=".8"/><rect x="2.500" y="3" width="11" height="8" fill="#5b83c8"/><path d="M4 10l5-6l3 2z" fill="#a9c3ea"/><rect x="4" y="13" width="8" height="1.500" fill="#9aa5b8"/></svg>[pl-beta-win - Remote Deskt...</div>
<div class="tk" style="left:683px"><svg viewBox="0 0 16 16"><circle cx="8" cy="8" r="7" fill="#e8e8e8"/><path d="M8 8L1.900 4.500A7 7 0 0 1 14.100 4.500z" fill="#dd5044"/><path d="M8 8L14.100 4.500A7 7 0 0 1 8 15z" fill="#fbce3a"/><path d="M8 8L8 15A7 7 0 0 1 1.900 4.500z" fill="#1da462"/><circle cx="8" cy="8" r="3.300" fill="#f2f2f2"/><circle cx="8" cy="8" r="2.600" fill="#4c8bf5"/></svg>[Hacker News - Google Chro...</div>
<div class="tk" style="left:883px"><svg viewBox="0 0 16 16"><rect x="1" y="1.500" width="14" height="13" rx="1.800" fill="#5a5a5a" stroke="#8a8a8a" stroke-width=".8"/><path d="M4 6l2.500 2L4 10" fill="none" stroke="#eee" stroke-width="1.100"/><rect x="7.500" y="10" width="3.500" height="1" fill="#eee"/></svg>[Terminal]</div>
<div class="tr" style="left:1675px;top:7px"><svg viewBox="0 0 18 18" style="width:18px;height:18px"><path d="M5.500 5.500l7 7L9 15.500V2.500l3.500 3l-7 7" fill="none" stroke="#3a3a3a" stroke-width="1.200"/></svg></div>
<div class="tr" style="left:1701px;top:6px"><svg viewBox="0 0 18 18" style="width:20px;height:20px"><path d="M16.800 1.200L11.500 6.500" stroke="#3a3a3a" stroke-width="1.700" stroke-linecap="round"/><ellipse cx="10.600" cy="7.400" rx="3.600" ry="2.500" transform="rotate(-45 10.600 7.400)" fill="#3a3a3a"/><ellipse cx="6.800" cy="11.200" rx="3.300" ry="2.400" transform="rotate(-45 6.800 11.200)" fill="#3a3a3a"/><path d="M5 13L1.200 16.800" stroke="#3a3a3a" stroke-width="1.700" stroke-linecap="round"/></svg></div>
<div class="tr" style="left:1727px;top:7px"><svg viewBox="0 0 18 18" style="width:18px;height:18px"><path d="M5.500 5.500l7 7L9 15.500V2.500l3.500 3l-7 7" fill="none" stroke="#3a3a3a" stroke-width="1.200"/></svg></div>
<div class="tr" style="left:1753px;top:7px"><svg viewBox="0 0 18 18" style="width:18px;height:18px"><path d="M1.500 6.500h3l4-3.500v12l-4-3.500h-3z" fill="#3a3a3a"/><path d="M10.500 6.300a3.500 3.500 0 0 1 0 5.400" fill="none" stroke="#3a3a3a" stroke-width="1.300"/><path d="M12.300 4.300a6 6 0 0 1 0 9.400" fill="none" stroke="#555" stroke-width="1.300"/><path d="M14.200 2.500a8.500 8.500 0 0 1 0 13" fill="none" stroke="#8a8a8a" stroke-width="1.200"/></svg></div>
<div class="tr" style="left:1778px;top:7px"><svg viewBox="0 0 18 18" style="width:18px;height:18px"><circle cx="9" cy="7.300" r="7" fill="#4fa83d"/><path d="M9 13.500v3.500l4.500-4.500z" fill="#4fa83d"/></svg></div>
<div class="tr" style="left:1802px;top:6px"><svg viewBox="0 0 18 18" style="width:20px;height:20px"><circle cx="9" cy="9" r="8.500" fill="#dd5044"/><path d="M9 9L1.600 4.750A8.500 8.500 0 0 1 16.400 4.750z" fill="#dd5044"/><path d="M9 9L16.400 4.750A8.500 8.500 0 0 1 9 17.500z" fill="#fbce3a"/><path d="M9 9L9 17.500A8.500 8.500 0 0 1 1.600 4.750z" fill="#1da462"/><circle cx="9" cy="9" r="4" fill="#f2f2f2"/><circle cx="9" cy="9" r="3.200" fill="#4c8bf5"/></svg></div>
<div class="tr" style="left:1826px;top:6px"><svg viewBox="0 0 18 18" style="width:20px;height:20px"><path d="M9 .8Q12 2.800 16.500 3q.3 9-7.500 14.300Q1.200 12 1.500 3Q6 2.800 9 .8z" fill="#e9e9e4" stroke="#bdbdb8" stroke-width=".8"/><path d="M4.500 9.200l3 3.300l6-7.500" fill="none" stroke="#86b832" stroke-width="2.400"/></svg></div>
<div class="tr" style="left:1849px;top:7px"><svg viewBox="0 0 18 18" style="width:18px;height:18px"><path d="M6.500 5.500L10.500 9.500L6.500 13.500" fill="none" stroke="#3a3a3a" stroke-width="1.200"/></svg></div>
<div class="t" style="left:1871px;top:8px;color:#2b2b2b">10:52</div>
<div class="abs" style="left:1909px;top:7px;width:5px;height:18px;background:linear-gradient(135deg,#8e8e8e 0 25%,transparent 25% 50%,#fff 50% 75%,transparent 75%) 0 0/3px 3px"></div>
</div>
</body></html>
